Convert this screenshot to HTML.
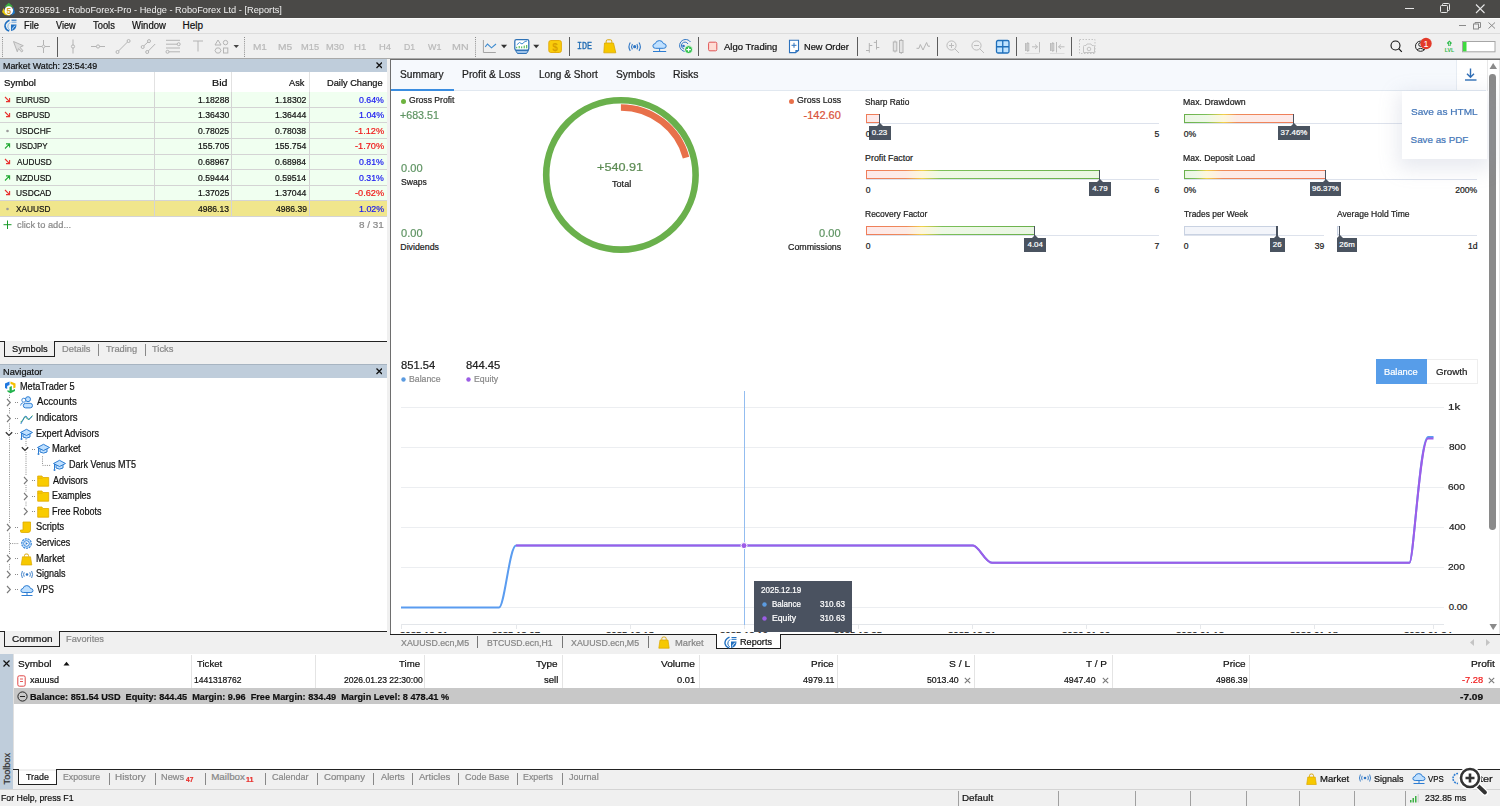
<!DOCTYPE html>
<html><head><meta charset="utf-8"><style>
html,body{margin:0;padding:0;width:1500px;height:806px;overflow:hidden;background:#f0f0f0;font-family:"Liberation Sans", sans-serif;}
.t{position:absolute;white-space:nowrap;line-height:1;-webkit-text-stroke:0.22px currentColor;}

</style></head><body>
<div style="position:absolute;left:0px;top:0px;width:1500px;height:17.5px;background:#4a4947"></div><svg style="position:absolute;left:1px;top:1.5px;" width="15" height="15" viewBox="0 0 15 15"><path d="M7.8 0.8 L12 4.5 L7.8 5.5 L3.6 4.5 Z" fill="#3cb043"/><path d="M12.5 5 L14 11 L10.5 13.8 L11.5 8.5 Z" fill="#1e78c8"/><path d="M2.5 6 L4 10.5 L9.5 13.8 L4 13 L1 10 Z" fill="#e8c800"/><circle cx="7.8" cy="8.6" r="4.3" fill="#fff"/><text x="7.8" y="11.6" font-size="8.4" font-weight="bold" text-anchor="middle" fill="#d9a020" font-family="Liberation Sans">5</text></svg><div class="t" style="left:18.72px;top:4.50px;font-size:9.8px;color:#f0f0f0;transform:scaleX(0.943);transform-origin:left;-webkit-text-stroke:0;">37269591 - RoboForex-Pro - Hedge - RoboForex Ltd - [Reports]</div><div style="position:absolute;left:1405px;top:8px;width:8.5px;height:1px;background:#e6e6e6"></div><svg style="position:absolute;left:1439px;top:3px;" width="12" height="11" viewBox="0 0 12 11"><rect x="1.5" y="2.5" width="7" height="7" rx="1" fill="none" stroke="#e6e6e6" stroke-width="1"/><path d="M3.5 2.5 V1.5 Q3.5 0.5 4.5 0.5 H9.5 Q10.5 0.5 10.5 1.5 V6.5 Q10.5 7.5 9.5 7.5 H8.5" fill="none" stroke="#e6e6e6" stroke-width="1"/></svg><svg style="position:absolute;left:1475px;top:3.5px;" width="11" height="10" viewBox="0 0 11 10"><path d="M1 0.5 L9.5 9 M9.5 0.5 L1 9" stroke="#e6e6e6" stroke-width="1.1"/></svg><div style="position:absolute;left:0px;top:17.5px;width:1500px;height:1px;background:#fafafa"></div><div style="position:absolute;left:0px;top:18.5px;width:1500px;height:14.5px;background:#f0f0f0"></div><svg style="position:absolute;left:4px;top:19.3px;" width="14" height="13" viewBox="0 0 14 13"><path d="M5.5 1.2 Q0.6 3.5 1 7.5 Q1.6 11 5.2 12" stroke="#1f6fc0" stroke-width="1.5" fill="none"/><path d="M6 3.5 Q3.5 5.5 3.8 8 Q4.2 10 5.8 10.8" stroke="#7fb8ea" stroke-width="1" fill="none"/><path d="M7.5 1.2 H12.5" stroke="#1f6fc0" stroke-width="1.1"/><path d="M7.5 3.2 H12.5" stroke="#6aa6de" stroke-width="1"/><path d="M7 5.5 H12.5 Q12.5 11 7 12 Z" fill="#1f6fc0"/><path d="M8.3 10.5 Q9 7.5 11.3 6.8" stroke="#bfe0ff" stroke-width="1" fill="none"/></svg><div class="t" style="left:24.26px;top:20.54px;font-size:10px;color:#111;transform:scaleX(0.923);transform-origin:left;">File</div><div class="t" style="left:56.20px;top:20.54px;font-size:10px;color:#111;transform:scaleX(0.909);transform-origin:left;">View</div><div class="t" style="left:93.11px;top:20.54px;font-size:10px;color:#111;transform:scaleX(0.937);transform-origin:left;">Tools</div><div class="t" style="left:132.20px;top:20.54px;font-size:10px;color:#111;transform:scaleX(0.954);transform-origin:left;">Window</div><div class="t" style="left:182.50px;top:20.54px;font-size:10px;color:#111;">Help</div><div style="position:absolute;left:1459px;top:24.5px;width:6.5px;height:1px;background:#8a8a8a"></div><svg style="position:absolute;left:1473px;top:21.5px;" width="9" height="8" viewBox="0 0 9 8"><rect x="0.5" y="2" width="5" height="5" fill="none" stroke="#8a8a8a"/><path d="M2 2 V0.5 H7.5 V5.5 H6" fill="none" stroke="#8a8a8a"/></svg><svg style="position:absolute;left:1488px;top:22px;" width="8" height="7" viewBox="0 0 8 7"><path d="M0.5 0.5 L7 6.5 M7 0.5 L0.5 6.5" stroke="#8a8a8a" stroke-width="1"/></svg><div style="position:absolute;left:0px;top:33px;width:1500px;height:1px;background:#dcdcdc"></div><div style="position:absolute;left:0px;top:34px;width:1500px;height:23.5px;background:#f0f0f0"></div><div style="position:absolute;left:0px;top:57.5px;width:1500px;height:1px;background:#a9a9a9"></div><svg style="position:absolute;left:1.7px;top:36.5px;" width="2" height="21" viewBox="0 0 2 21"><g fill="#8c8c8c"><rect x="0" y="0.0" width="1" height="1"/><rect x="0" y="2.1" width="1" height="1"/><rect x="0" y="4.2" width="1" height="1"/><rect x="0" y="6.3" width="1" height="1"/><rect x="0" y="8.4" width="1" height="1"/><rect x="0" y="10.5" width="1" height="1"/><rect x="0" y="12.6" width="1" height="1"/><rect x="0" y="14.7" width="1" height="1"/><rect x="0" y="16.8" width="1" height="1"/><rect x="0" y="18.9" width="1" height="1"/></g></svg><svg style="position:absolute;left:0px;top:34px;" width="60" height="24" viewBox="0 0 60 24">
      <path d="M13.5 7.5 L23.3 11.7 L20 13.3 L23 16.8 L21.6 18 L18.5 14.6 L17.3 17.8 Z" fill="#dedede" stroke="#b0b0b0" stroke-width="0.9" stroke-linejoin="round"/>
      <path d="M37 12.5 H50 M43.5 6 V19" stroke="#b4b4b4" stroke-width="1"/>
      <circle cx="43.5" cy="12.5" r="1.4" fill="#f0f0f0" stroke="#b4b4b4" stroke-width="0.9"/>
    </svg><div style="position:absolute;left:57px;top:37px;width:1px;height:19.5px;background:#5c5c5c"></div><svg style="position:absolute;left:60px;top:34px;" width="190" height="24" viewBox="0 0 190 24">
      <g stroke="#b4b4b4" stroke-width="1" fill="#f0f0f0">
      <path d="M13 5.5 V19.5"/><circle cx="13" cy="12.5" r="1.6"/>
      <path d="M31 12.5 H45"/><circle cx="38" cy="12.5" r="1.6"/>
      <path d="M58.5 17 L67.5 8"/><circle cx="57.5" cy="18" r="1.5"/><circle cx="68.6" cy="7" r="1.5"/>
      <path d="M83.7 12 L88 8"/><circle cx="82.7" cy="13" r="1.5"/><circle cx="89" cy="7.1" r="1.5"/>
      <path d="M88.3 17 L95.2 10"/><circle cx="87.2" cy="18" r="1.5"/>
      <path d="M106 6.3 H120 M106 10.2 H117.2 M106 14 H120 M109 17.8 H120"/>
      <circle cx="118.7" cy="10.2" r="1.5"/><circle cx="107.5" cy="17.8" r="1.5"/>
      <path d="M133 7 H143 M138 7 V17.5"/>
      <path d="M155 11 L158 6 L161 11 Z"/><circle cx="165.5" cy="8.6" r="2.2"/>
      <path d="M155 16.5 L156.5 14 H159.5 L161 16.5 L159.5 19 H156.5 Z"/><rect x="163.5" y="14" width="4.3" height="5"/>
      </g>
      <path d="M173.5 11 H179 L176.25 14 Z" fill="#444"/>
    </svg><svg style="position:absolute;left:244px;top:36.5px;" width="2" height="21" viewBox="0 0 2 21"><g fill="#8c8c8c"><rect x="0" y="0.0" width="1" height="1"/><rect x="0" y="2.1" width="1" height="1"/><rect x="0" y="4.2" width="1" height="1"/><rect x="0" y="6.3" width="1" height="1"/><rect x="0" y="8.4" width="1" height="1"/><rect x="0" y="10.5" width="1" height="1"/><rect x="0" y="12.6" width="1" height="1"/><rect x="0" y="14.7" width="1" height="1"/><rect x="0" y="16.8" width="1" height="1"/><rect x="0" y="18.9" width="1" height="1"/></g></svg><div class="t" style="left:253.20px;top:41.89px;font-size:9.7px;color:#b9b9b9;transform:scaleX(1.037);transform-origin:left;">M1</div><div class="t" style="left:278.18px;top:41.89px;font-size:9.7px;color:#b9b9b9;transform:scaleX(1.053);transform-origin:left;">M5</div><div class="t" style="left:301.26px;top:41.89px;font-size:9.7px;color:#b9b9b9;transform:scaleX(0.958);transform-origin:left;">M15</div><div class="t" style="left:326.26px;top:41.89px;font-size:9.7px;color:#b9b9b9;transform:scaleX(0.958);transform-origin:left;">M30</div><div class="t" style="left:354.24px;top:41.89px;font-size:9.7px;color:#b9b9b9;transform:scaleX(0.984);transform-origin:left;">H1</div><div class="t" style="left:379.25px;top:41.89px;font-size:9.7px;color:#b9b9b9;transform:scaleX(0.967);transform-origin:left;">H4</div><div class="t" style="left:404.31px;top:41.89px;font-size:9.7px;color:#b9b9b9;transform:scaleX(0.895);transform-origin:left;">D1</div><div class="t" style="left:428.00px;top:41.89px;font-size:9.7px;color:#b9b9b9;transform:scaleX(0.922);transform-origin:left;">W1</div><div class="t" style="left:452.14px;top:41.89px;font-size:9.7px;color:#b9b9b9;transform:scaleX(1.102);transform-origin:left;">MN</div><svg style="position:absolute;left:474.5px;top:36.5px;" width="2" height="21" viewBox="0 0 2 21"><g fill="#8c8c8c"><rect x="0" y="0.0" width="1" height="1"/><rect x="0" y="2.1" width="1" height="1"/><rect x="0" y="4.2" width="1" height="1"/><rect x="0" y="6.3" width="1" height="1"/><rect x="0" y="8.4" width="1" height="1"/><rect x="0" y="10.5" width="1" height="1"/><rect x="0" y="12.6" width="1" height="1"/><rect x="0" y="14.7" width="1" height="1"/><rect x="0" y="16.8" width="1" height="1"/><rect x="0" y="18.9" width="1" height="1"/></g></svg><svg style="position:absolute;left:478px;top:34px;" width="92" height="24" viewBox="0 0 92 24">
      <path d="M5.4 6 V18.5 H17.8" stroke="#a4a4a4" stroke-width="1" fill="none"/>
      <path d="M7.2 12.8 L9.5 10 L13.5 13.8 L18 10" stroke="#3d8bd0" stroke-width="1.1" fill="none"/>
      <path d="M23 10.8 H29.1 L26.05 14.2 Z" fill="#333"/>
      <rect x="36.8" y="5.6" width="14" height="10.6" rx="1.6" fill="#fff" stroke="#2f72b6" stroke-width="1.3"/>
      <path d="M37.5 16.5 H50.5 L48.5 19.5 H39.5 Z" fill="#9fc3ea" stroke="#2f72b6" stroke-width="1"/>
      <path d="M38.8 10.8 L41.5 8.5 L44 10 L47 7.5 L49 7" stroke="#3d8bd0" stroke-width="1" fill="none"/>
      <g fill="#3cb043"><rect x="38.2" y="12.8" width="1" height="1.5"/><rect x="40.7" y="12" width="1" height="2.3"/><rect x="43.2" y="12.4" width="1" height="1.9"/><rect x="45.7" y="11.6" width="1" height="2.7"/><rect x="48.2" y="11" width="1" height="3.3"/></g>
      <path d="M55.2 10.8 H61.3 L58.25 14.2 Z" fill="#333"/>
      <rect x="70.8" y="6.5" width="12.6" height="12" rx="2" fill="#f9cc0b" stroke="#e2a700" stroke-width="0.9"/>
      <text x="77.1" y="16.8" font-size="10" font-weight="bold" text-anchor="middle" fill="#d9a000" font-family="Liberation Sans">$</text>
    </svg><div style="position:absolute;left:568.5px;top:37px;width:1px;height:19px;background:#5c5c5c"></div><div class="t" style="left:577.04px;top:41.40px;font-size:10.4px;color:#1f6bb3;font-family:'Liberation Mono';transform:scaleX(0.811);transform-origin:left;-webkit-text-stroke:0.35px currentColor;">IDE</div><svg style="position:absolute;left:600px;top:34px;" width="100" height="24" viewBox="0 0 100 24">
      <path d="M6.2 8.8 V7.2 Q6.2 5.8 7.6 5.8 H10.4 Q11.8 5.8 11.8 7.2 V8.8" stroke="#d9a400" stroke-width="1" fill="none"/>
      <path d="M4.5 9 H13.5 L15.8 18.8 H3.8 Z" fill="#f6c800" stroke="#dba700" stroke-width="0.8"/>
      <g stroke="#2d75c4" stroke-width="1.1" fill="none">
        <path d="M30.3 8.5 Q27.6 12.7 30.3 16.9"/><path d="M32.4 10 Q30.8 12.7 32.4 15.4"/>
        <path d="M39 8.5 Q41.7 12.7 39 16.9"/><path d="M36.9 10 Q38.5 12.7 36.9 15.4"/>
      </g>
      <circle cx="34.7" cy="12.7" r="1.6" fill="#2d75c4"/>
      <path d="M55.5 14.3 Q52.8 14.3 52.9 11.9 Q53 9.8 55.3 9.6 Q56 6.6 59.4 6.6 Q62.6 6.6 63.4 9.6 Q66.2 9.7 66.2 12 Q66.2 14.3 63.7 14.3 Z" fill="#bfe0ff" stroke="#2d7dd2" stroke-width="1"/>
      <path d="M59.6 14.3 V17.5 M53 17.5 H66.2" stroke="#2d7dd2" stroke-width="1"/>
      <g stroke="#2d75c4" stroke-width="1" fill="none">
        <path d="M86 17.5 A6 6 0 1 1 90.5 8"/><path d="M84 15 A3.5 3.5 0 1 1 88 10"/>
      </g>
      <circle cx="83.5" cy="12" r="1.3" fill="#2d75c4"/>
      <circle cx="88.6" cy="15.6" r="4" fill="#33c04d" stroke="#fff" stroke-width="0.8"/>
      <path d="M88.6 13.4 V17.8 M86.4 15.6 H90.8" stroke="#fff" stroke-width="1.1"/>
    </svg><div style="position:absolute;left:697.8px;top:37px;width:1px;height:19px;background:#5c5c5c"></div><svg style="position:absolute;left:700px;top:34px;" width="110" height="24" viewBox="0 0 110 24">
      <rect x="8.6" y="8.2" width="8.2" height="8.6" rx="1.2" fill="#ffdcd4" stroke="#e05454" stroke-width="1"/>
      <path d="M89.5 6.3 H98.5 V16.5 L95.5 18.6 H89.5 Z" fill="#fff" stroke="#2d72bd" stroke-width="1.1"/>
      <path d="M98.6 16 L95.4 18.8 V16 Z" fill="#2d72bd"/>
      <path d="M94 8.8 V13.8 M91.5 11.3 H96.5" stroke="#2d72bd" stroke-width="1"/>
    </svg><div class="t" style="left:723.50px;top:41.80px;font-size:9.8px;color:#111;transform:scaleX(0.970);transform-origin:left;">Algo Trading</div><div class="t" style="left:804.26px;top:41.80px;font-size:9.8px;color:#111;transform:scaleX(0.947);transform-origin:left;">New Order</div><div style="position:absolute;left:857px;top:37px;width:1px;height:19px;background:#5c5c5c"></div><svg style="position:absolute;left:860px;top:34px;" width="80" height="24" viewBox="0 0 80 24">
      <g stroke="#b4b4b4" stroke-width="1" fill="none">
        <path d="M9.3 9 V18.7 M6 16.5 H9.3 M9.3 11.5 H12.3"/>
        <path d="M16.5 6 V15.5 M13.8 8.4 H16.5 M16.5 13.5 H19.3"/>
        <rect x="33.3" y="8" width="3.5" height="9" fill="#e4e4e4"/><path d="M35 6.5 V8 M35 17 V18.5"/>
        <rect x="39.5" y="6.5" width="3.5" height="12" fill="#e4e4e4"/><path d="M41.2 5 V6.5 M41.2 18.5 V20"/>
        <path d="M56.5 14.3 H59 L60.3 10.5 L63 16 L66.6 8.5 L68 12.2 H70"/>
      </g>
    </svg><div style="position:absolute;left:936.8px;top:37px;width:1px;height:19px;background:#5c5c5c"></div><svg style="position:absolute;left:940px;top:34px;" width="160" height="24" viewBox="0 0 160 24">
      <g stroke="#bcbcbc" stroke-width="1" fill="none">
        <circle cx="11.5" cy="11.5" r="4.6"/><path d="M14.8 14.8 L19 19 M9 11.5 H14 M11.5 9 V14"/>
        <circle cx="36.5" cy="11.5" r="4.6"/><path d="M39.8 14.8 L44 19 M34 11.5 H39"/>
      </g>
      <rect x="56.5" y="6.5" width="12.5" height="12.5" rx="1.5" fill="#bfe3ff" stroke="#1f6fba" stroke-width="1.3"/>
      <path d="M62.75 6.5 V19 M56.5 12.75 H69" stroke="#1f6fba" stroke-width="1.3"/>
    </svg><div style="position:absolute;left:1016.2px;top:37px;width:1px;height:19px;background:#5c5c5c"></div><svg style="position:absolute;left:1020px;top:34px;" width="50" height="24" viewBox="0 0 50 24">
      <g stroke="#bcbcbc" stroke-width="1" fill="none">
        <path d="M5.5 9 V17 M7.8 8 V18"/><rect x="6.8" y="9.5" width="2" height="7"/>
        <path d="M12 12.8 H17.5 M15 10.5 L17.5 12.8 L15 15"/><path d="M19.5 8 V18.5"/>
        <path d="M5 19.5 H19.5" stroke="#dcdcdc"/>
        <path d="M30.5 9 V17 M32.8 8 V18"/><rect x="31.8" y="9.5" width="2" height="7"/>
        <path d="M36.5 8 V18.5"/><path d="M38.5 12.8 H44.5 M41 10.5 L38.5 12.8 L41 15"/>
        <path d="M30 19.5 H44.5" stroke="#dcdcdc"/>
      </g>
    </svg><div style="position:absolute;left:1071.2px;top:37px;width:1px;height:19px;background:#5c5c5c"></div><svg style="position:absolute;left:1076px;top:34px;" width="24" height="24" viewBox="0 0 24 24">
      <rect x="3.5" y="5.5" width="15.5" height="14" fill="none" stroke="#c4c4c4" stroke-width="1" stroke-dasharray="1.5 1.5"/>
      <path d="M7.5 18.5 V12.5 Q7.5 11.5 8.5 11.5 H10 L11 10 H15 L16 11.5 H17.5 Q18.5 11.5 18.5 12.5 V18.5 Z" fill="#f0f0f0" stroke="#c4c4c4" stroke-width="1"/>
      <circle cx="13" cy="15" r="1.8" fill="none" stroke="#c4c4c4" stroke-width="1"/>
    </svg><svg style="position:absolute;left:1385px;top:34px;" width="115" height="24" viewBox="0 0 115 24">
      <circle cx="10.5" cy="11.5" r="4.5" fill="none" stroke="#111" stroke-width="1.1"/>
      <path d="M13.7 14.7 L16.8 17.8" stroke="#111" stroke-width="1.2"/>
      <circle cx="35.6" cy="12.2" r="5.1" fill="none" stroke="#222" stroke-width="1"/>
      <circle cx="35.6" cy="10.5" r="1.9" fill="none" stroke="#222" stroke-width="1"/>
      <path d="M32 16 Q35.6 12.8 39.2 16" fill="none" stroke="#222" stroke-width="1"/>
      <circle cx="41" cy="9.5" r="5.7" fill="#e33a2a"/>
      <text x="41" y="13.2" font-size="9" text-anchor="middle" fill="#fff" font-family="Liberation Sans">1</text>
      <path d="M64.4 6.5 L67 9 L65.6 10.5 V12 H63.2 V10.5 L61.8 9 Z" fill="#2db84a"/>
      <path d="M64.4 8 V11.5" stroke="#fff" stroke-width="0.7"/>
      <text x="64.5" y="18.2" font-size="5.2" font-weight="bold" text-anchor="middle" fill="#2db84a" font-family="Liberation Sans">LVL</text>
      <rect x="77.5" y="7.5" width="32.5" height="10.3" fill="#fff" stroke="#a6a6a6" stroke-width="1"/>
      <rect x="78" y="8" width="3.5" height="9.3" fill="#3edb3e"/>
    </svg><div style="position:absolute;left:0px;top:58.5px;width:387px;height:13.3px;background:#bfcddb"></div><div class="t" style="left:2.99px;top:60.50px;font-size:9.8px;color:#111;transform:scaleX(0.908);transform-origin:left;">Market Watch: 23:54:49</div><svg style="position:absolute;left:375.5px;top:62px;" width="6.5" height="6.5" viewBox="0 0 6.5 6.5"><path d="M0.5 0.5 L6.0 6.0 M6.0 0.5 L0.5 6.0" stroke="#111" stroke-width="1.3"/></svg><div style="position:absolute;left:0px;top:71.8px;width:387px;height:269.5px;background:#fff"></div><div style="position:absolute;left:387px;top:71.8px;width:3px;height:269.5px;background:#f0f0f0"></div><div class="t" style="left:4.32px;top:77.50px;font-size:9.8px;color:#111;transform:scaleX(0.979);transform-origin:left;">Symbol</div><div class="t" style="left:212.14px;top:77.50px;font-size:9.8px;color:#111;transform:scaleX(1.091);transform-origin:left;">Bid</div><div class="t" style="left:289.20px;top:77.50px;font-size:9.8px;color:#111;transform:scaleX(0.943);transform-origin:left;">Ask</div><div class="t" style="left:326.76px;top:77.50px;font-size:9.8px;color:#111;transform:scaleX(0.945);transform-origin:left;">Daily Change</div><div style="position:absolute;left:154.3px;top:72px;width:1px;height:20px;background:#e2e2e2"></div><div style="position:absolute;left:231px;top:72px;width:1px;height:20px;background:#e2e2e2"></div><div style="position:absolute;left:308.5px;top:72px;width:1px;height:20px;background:#e2e2e2"></div><div style="position:absolute;left:0px;top:92.0px;width:386.5px;height:15.625px;background:#f0fff0"></div><div style="position:absolute;left:0px;top:106.625px;width:386.5px;height:1px;background:#d4d4d4"></div><div style="position:absolute;left:154.3px;top:92.0px;width:1px;height:15.625px;background:#d4d4d4"></div><div style="position:absolute;left:231px;top:92.0px;width:1px;height:15.625px;background:#d4d4d4"></div><div style="position:absolute;left:308.5px;top:92.0px;width:1px;height:15.625px;background:#d4d4d4"></div><svg style="position:absolute;left:4px;top:95.6px;" width="7" height="8" viewBox="0 0 7 8"><path d="M1 1 L5.6 5.6 M5.6 2 V5.6 H2" stroke="#e8322e" stroke-width="1.1" fill="none"/></svg><div class="t" style="left:15.96px;top:94.52px;font-size:9.9px;color:#111;transform:scaleX(0.813);transform-origin:left;">EURUSD</div><div class="t" style="left:197.69px;top:94.52px;font-size:9.9px;color:#111;transform:scaleX(0.878);transform-origin:left;">1.18288</div><div class="t" style="left:275.09px;top:94.52px;font-size:9.9px;color:#111;transform:scaleX(0.881);transform-origin:left;">1.18302</div><div class="t" style="left:359.04px;top:94.52px;font-size:9.9px;color:#1a1af0;transform:scaleX(0.888);transform-origin:left;">0.64%</div><div style="position:absolute;left:0px;top:107.625px;width:386.5px;height:15.625px;background:#f0fff0"></div><div style="position:absolute;left:0px;top:122.25px;width:386.5px;height:1px;background:#d4d4d4"></div><div style="position:absolute;left:154.3px;top:107.625px;width:1px;height:15.625px;background:#d4d4d4"></div><div style="position:absolute;left:231px;top:107.625px;width:1px;height:15.625px;background:#d4d4d4"></div><div style="position:absolute;left:308.5px;top:107.625px;width:1px;height:15.625px;background:#d4d4d4"></div><svg style="position:absolute;left:4px;top:111.225px;" width="7" height="8" viewBox="0 0 7 8"><path d="M1 1 L5.6 5.6 M5.6 2 V5.6 H2" stroke="#e8322e" stroke-width="1.1" fill="none"/></svg><div class="t" style="left:16.19px;top:110.14px;font-size:9.9px;color:#111;transform:scaleX(0.819);transform-origin:left;">GBPUSD</div><div class="t" style="left:197.69px;top:110.14px;font-size:9.9px;color:#111;transform:scaleX(0.878);transform-origin:left;">1.36430</div><div class="t" style="left:275.09px;top:110.14px;font-size:9.9px;color:#111;transform:scaleX(0.876);transform-origin:left;">1.36444</div><div class="t" style="left:358.68px;top:110.14px;font-size:9.9px;color:#1a1af0;transform:scaleX(0.901);transform-origin:left;">1.04%</div><div style="position:absolute;left:0px;top:123.25px;width:386.5px;height:15.625px;background:#f0fff0"></div><div style="position:absolute;left:0px;top:137.875px;width:386.5px;height:1px;background:#d4d4d4"></div><div style="position:absolute;left:154.3px;top:123.25px;width:1px;height:15.625px;background:#d4d4d4"></div><div style="position:absolute;left:231px;top:123.25px;width:1px;height:15.625px;background:#d4d4d4"></div><div style="position:absolute;left:308.5px;top:123.25px;width:1px;height:15.625px;background:#d4d4d4"></div><svg style="position:absolute;left:4px;top:126.85px;" width="7" height="8" viewBox="0 0 7 8"><circle cx="3.5" cy="4" r="1.3" fill="#9a9a9a"/></svg><div class="t" style="left:16.01px;top:125.77px;font-size:9.9px;color:#111;transform:scaleX(0.845);transform-origin:left;">USDCHF</div><div class="t" style="left:198.04px;top:125.77px;font-size:9.9px;color:#111;transform:scaleX(0.868);transform-origin:left;">0.78025</div><div class="t" style="left:275.44px;top:125.77px;font-size:9.9px;color:#111;transform:scaleX(0.868);transform-origin:left;">0.78038</div><div class="t" style="left:354.73px;top:125.77px;font-size:9.9px;color:#f01a1a;transform:scaleX(0.932);transform-origin:left;">-1.12%</div><div style="position:absolute;left:0px;top:138.875px;width:386.5px;height:15.625px;background:#f0fff0"></div><div style="position:absolute;left:0px;top:153.5px;width:386.5px;height:1px;background:#d4d4d4"></div><div style="position:absolute;left:154.3px;top:138.875px;width:1px;height:15.625px;background:#d4d4d4"></div><div style="position:absolute;left:231px;top:138.875px;width:1px;height:15.625px;background:#d4d4d4"></div><div style="position:absolute;left:308.5px;top:138.875px;width:1px;height:15.625px;background:#d4d4d4"></div><svg style="position:absolute;left:4px;top:142.475px;" width="7" height="8" viewBox="0 0 7 8"><path d="M1 6.5 L5.6 1.9 M2 1.9 H5.6 V5.5" stroke="#22aa33" stroke-width="1.1" fill="none"/></svg><div class="t" style="left:16.04px;top:141.39px;font-size:9.9px;color:#111;transform:scaleX(0.812);transform-origin:left;">USDJPY</div><div class="t" style="left:197.69px;top:141.39px;font-size:9.9px;color:#111;transform:scaleX(0.878);transform-origin:left;">155.705</div><div class="t" style="left:275.09px;top:141.39px;font-size:9.9px;color:#111;transform:scaleX(0.876);transform-origin:left;">155.754</div><div class="t" style="left:354.73px;top:141.39px;font-size:9.9px;color:#f01a1a;transform:scaleX(0.932);transform-origin:left;">-1.70%</div><div style="position:absolute;left:0px;top:154.5px;width:386.5px;height:15.625px;background:#f0fff0"></div><div style="position:absolute;left:0px;top:169.125px;width:386.5px;height:1px;background:#d4d4d4"></div><div style="position:absolute;left:154.3px;top:154.5px;width:1px;height:15.625px;background:#d4d4d4"></div><div style="position:absolute;left:231px;top:154.5px;width:1px;height:15.625px;background:#d4d4d4"></div><div style="position:absolute;left:308.5px;top:154.5px;width:1px;height:15.625px;background:#d4d4d4"></div><svg style="position:absolute;left:4px;top:158.1px;" width="7" height="8" viewBox="0 0 7 8"><path d="M1 1 L5.6 5.6 M5.6 2 V5.6 H2" stroke="#e8322e" stroke-width="1.1" fill="none"/></svg><div class="t" style="left:16.60px;top:157.02px;font-size:9.9px;color:#111;transform:scaleX(0.834);transform-origin:left;">AUDUSD</div><div class="t" style="left:198.04px;top:157.02px;font-size:9.9px;color:#111;transform:scaleX(0.871);transform-origin:left;">0.68967</div><div class="t" style="left:275.44px;top:157.02px;font-size:9.9px;color:#111;transform:scaleX(0.866);transform-origin:left;">0.68984</div><div class="t" style="left:359.04px;top:157.02px;font-size:9.9px;color:#1a1af0;transform:scaleX(0.888);transform-origin:left;">0.81%</div><div style="position:absolute;left:0px;top:170.125px;width:386.5px;height:15.625px;background:#f0fff0"></div><div style="position:absolute;left:0px;top:184.75px;width:386.5px;height:1px;background:#d4d4d4"></div><div style="position:absolute;left:154.3px;top:170.125px;width:1px;height:15.625px;background:#d4d4d4"></div><div style="position:absolute;left:231px;top:170.125px;width:1px;height:15.625px;background:#d4d4d4"></div><div style="position:absolute;left:308.5px;top:170.125px;width:1px;height:15.625px;background:#d4d4d4"></div><svg style="position:absolute;left:4px;top:173.725px;" width="7" height="8" viewBox="0 0 7 8"><path d="M1 6.5 L5.6 1.9 M2 1.9 H5.6 V5.5" stroke="#22aa33" stroke-width="1.1" fill="none"/></svg><div class="t" style="left:15.92px;top:172.64px;font-size:9.9px;color:#111;transform:scaleX(0.862);transform-origin:left;">NZDUSD</div><div class="t" style="left:198.04px;top:172.64px;font-size:9.9px;color:#111;transform:scaleX(0.866);transform-origin:left;">0.59444</div><div class="t" style="left:275.44px;top:172.64px;font-size:9.9px;color:#111;transform:scaleX(0.866);transform-origin:left;">0.59514</div><div class="t" style="left:359.04px;top:172.64px;font-size:9.9px;color:#1a1af0;transform:scaleX(0.888);transform-origin:left;">0.31%</div><div style="position:absolute;left:0px;top:185.75px;width:386.5px;height:15.625px;background:#f0fff0"></div><div style="position:absolute;left:0px;top:200.375px;width:386.5px;height:1px;background:#d4d4d4"></div><div style="position:absolute;left:154.3px;top:185.75px;width:1px;height:15.625px;background:#d4d4d4"></div><div style="position:absolute;left:231px;top:185.75px;width:1px;height:15.625px;background:#d4d4d4"></div><div style="position:absolute;left:308.5px;top:185.75px;width:1px;height:15.625px;background:#d4d4d4"></div><svg style="position:absolute;left:4px;top:189.35px;" width="7" height="8" viewBox="0 0 7 8"><path d="M1 1 L5.6 5.6 M5.6 2 V5.6 H2" stroke="#e8322e" stroke-width="1.1" fill="none"/></svg><div class="t" style="left:16.01px;top:188.27px;font-size:9.9px;color:#111;transform:scaleX(0.848);transform-origin:left;">USDCAD</div><div class="t" style="left:197.69px;top:188.27px;font-size:9.9px;color:#111;transform:scaleX(0.878);transform-origin:left;">1.37025</div><div class="t" style="left:275.09px;top:188.27px;font-size:9.9px;color:#111;transform:scaleX(0.876);transform-origin:left;">1.37044</div><div class="t" style="left:354.73px;top:188.27px;font-size:9.9px;color:#f01a1a;transform:scaleX(0.932);transform-origin:left;">-0.62%</div><div style="position:absolute;left:0px;top:201.375px;width:386.5px;height:15.625px;background:#f0e68c"></div><div style="position:absolute;left:0px;top:216.0px;width:386.5px;height:1px;background:#d4d4d4"></div><div style="position:absolute;left:154.3px;top:201.375px;width:1px;height:15.625px;background:#d4d4d4"></div><div style="position:absolute;left:231px;top:201.375px;width:1px;height:15.625px;background:#d4d4d4"></div><div style="position:absolute;left:308.5px;top:201.375px;width:1px;height:15.625px;background:#d4d4d4"></div><svg style="position:absolute;left:4px;top:204.975px;" width="7" height="8" viewBox="0 0 7 8"><circle cx="3.5" cy="4" r="1.3" fill="#9a9a9a"/></svg><div class="t" style="left:16.43px;top:203.89px;font-size:9.9px;color:#111;transform:scaleX(0.837);transform-origin:left;">XAUUSD</div><div class="t" style="left:198.13px;top:203.89px;font-size:9.9px;color:#111;transform:scaleX(0.866);transform-origin:left;">4986.13</div><div class="t" style="left:275.53px;top:203.89px;font-size:9.9px;color:#111;transform:scaleX(0.868);transform-origin:left;">4986.39</div><div class="t" style="left:358.68px;top:203.89px;font-size:9.9px;color:#1a1af0;transform:scaleX(0.901);transform-origin:left;">1.02%</div><svg style="position:absolute;left:3px;top:219.5px;" width="10" height="10" viewBox="0 0 10 10"><path d="M4.5 0.5 V9 M0.5 4.7 H8.5" stroke="#1a9a2a" stroke-width="1"/></svg><div class="t" style="left:16.63px;top:220.09px;font-size:9.7px;color:#8a8a8a;transform:scaleX(0.957);transform-origin:left;">click to add...</div><div class="t" style="left:358.60px;top:220.09px;font-size:9.7px;color:#8a8a8a;transform:scaleX(1.024);transform-origin:left;">8 / 31</div><div style="position:absolute;left:0px;top:341.3px;width:390px;height:23px;background:#f0f0f0"></div><div style="position:absolute;left:0px;top:341.3px;width:4.7px;height:1px;background:#222"></div><div style="position:absolute;left:54.5px;top:341.3px;width:332px;height:1px;background:#222"></div><div style="position:absolute;left:4.2px;top:341.3px;width:1px;height:15.5px;background:#222"></div><div style="position:absolute;left:54px;top:341.3px;width:1px;height:15.5px;background:#222"></div><div style="position:absolute;left:4.2px;top:356px;width:50.8px;height:1px;background:#222"></div><div class="t" style="left:11.63px;top:344.20px;font-size:9.8px;color:#111;transform:scaleX(0.949);transform-origin:left;">Symbols</div><div class="t" style="left:61.75px;top:344.20px;font-size:9.8px;color:#888;transform:scaleX(0.952);transform-origin:left;">Details</div><div style="position:absolute;left:98px;top:344px;width:1px;height:12px;background:#888"></div><div class="t" style="left:105.81px;top:344.20px;font-size:9.8px;color:#888;transform:scaleX(0.950);transform-origin:left;">Trading</div><div style="position:absolute;left:144.5px;top:344px;width:1px;height:12px;background:#888"></div><div class="t" style="left:152.31px;top:344.20px;font-size:9.8px;color:#888;transform:scaleX(0.954);transform-origin:left;">Ticks</div><div style="position:absolute;left:0px;top:364.4px;width:387px;height:1px;background:#a7b4c1"></div><div style="position:absolute;left:0px;top:365.4px;width:387px;height:12.3px;background:#bfcddb"></div><div class="t" style="left:2.66px;top:366.50px;font-size:9.8px;color:#111;transform:scaleX(0.938);transform-origin:left;">Navigator</div><svg style="position:absolute;left:375.5px;top:368px;" width="6.5" height="6.5" viewBox="0 0 6.5 6.5"><path d="M0.5 0.5 L6.0 6.0 M6.0 0.5 L0.5 6.0" stroke="#111" stroke-width="1.3"/></svg><div style="position:absolute;left:0px;top:377.7px;width:387px;height:253.3px;background:#fff"></div><div style="position:absolute;left:387px;top:364.4px;width:3px;height:267px;background:#f0f0f0"></div><svg style="position:absolute;left:0px;top:378px;" width="60" height="260" viewBox="0 0 60 260">
      <path d="M9.5 16.80000000000001 V196.29999999999995" stroke="#8a8a8a" stroke-width="1" stroke-dasharray="1 1.2"/>
      <path d="M26 60.67500000000001 V129.8" stroke="#8a8a8a" stroke-width="1" stroke-dasharray="1 1.2"/>
      <path d="M42.5 78.30000000000001 V86.92500000000001" stroke="#8a8a8a" stroke-width="1" stroke-dasharray="1 1.2"/>
      <path d="M42.5 87.42500000000001 H51" stroke="#8a8a8a" stroke-width="1" stroke-dasharray="1 1.2"/>
      <path d="M10 165.54999999999995 H19" stroke="#8a8a8a" stroke-width="1" stroke-dasharray="1 1.2"/>
    </svg><svg style="position:absolute;left:3.5px;top:380.8px;" width="13" height="13" viewBox="0 0 13 13"><path d="M1 2.5 L5.5 0.5 L5.5 4 L3.2 5 V8 L1 7 Z" fill="#1e78e0"/><path d="M6.5 0.5 L11.5 2.5 V6.5 L9.3 7.5 V4 L6.5 3 Z" fill="#f5c000"/><path d="M3.5 9 L5.5 10 V6 L7.8 5 V9.5 L11 8 V10 L6.5 12.2 L3.5 10.8 Z" fill="#22b24c"/></svg><div class="t" style="left:19.77px;top:381.84px;font-size:10px;color:#111;transform:scaleX(0.915);transform-origin:left;">MetaTrader 5</div><svg style="position:absolute;left:6.0px;top:397.925px;" width="6" height="9" viewBox="0 0 6 9"><rect x="0" y="0" width="6" height="9" fill="#fff"/><path d="M1 1 L4.3 4.5 L1 8" stroke="#7a7a7a" stroke-width="1.1" fill="none"/></svg><svg style="position:absolute;left:15.0px;top:401.925px;" width="4" height="1" viewBox="0 0 4 1"><rect x="0" y="0" width="1" height="1" fill="#8a8a8a"/><rect x="2" y="0" width="1" height="1" fill="#8a8a8a"/></svg><div class="t" style="left:36.50px;top:397.46px;font-size:10px;color:#111;transform:scaleX(0.967);transform-origin:left;">Accounts</div><svg style="position:absolute;left:20.0px;top:396.425px;" width="13" height="13" viewBox="0 0 13 13"><circle cx="3.8" cy="4.2" r="2" fill="none" stroke="#2d7dd2" stroke-width="0.9"/><path d="M0.6 9.5 Q0.8 7 3 6.8" fill="none" stroke="#2d7dd2" stroke-width="0.9"/><circle cx="8" cy="3.2" r="2.5" fill="#bfe0ff" stroke="#2d7dd2" stroke-width="1"/><rect x="3.3" y="7.3" width="9.2" height="4.6" rx="2.3" fill="#bfe0ff" stroke="#2d7dd2" stroke-width="1"/></svg><svg style="position:absolute;left:6.0px;top:413.55px;" width="6" height="9" viewBox="0 0 6 9"><rect x="0" y="0" width="6" height="9" fill="#fff"/><path d="M1 1 L4.3 4.5 L1 8" stroke="#7a7a7a" stroke-width="1.1" fill="none"/></svg><svg style="position:absolute;left:15.0px;top:417.55px;" width="4" height="1" viewBox="0 0 4 1"><rect x="0" y="0" width="1" height="1" fill="#8a8a8a"/><rect x="2" y="0" width="1" height="1" fill="#8a8a8a"/></svg><div class="t" style="left:35.64px;top:413.09px;font-size:10px;color:#111;transform:scaleX(0.961);transform-origin:left;">Indicators</div><svg style="position:absolute;left:20.0px;top:412.05px;" width="13" height="13" viewBox="0 0 13 13"><path d="M0.5 10 Q3 9 4 6 Q5 3 6.5 6 Q8 9 10 6.5 L12.5 3.5" stroke="#3cb043" stroke-width="1" fill="none"/><path d="M0.8 12 Q3 8 4.5 5 Q6 2.5 7.5 6 Q9 9.5 12 4" stroke="#2d7dd2" stroke-width="0.9" fill="none"/></svg><svg style="position:absolute;left:4.699999999999999px;top:430.675px;" width="8" height="6" viewBox="0 0 8 6"><rect x="0" y="0" width="8" height="6" fill="#fff"/><path d="M0.8 1.2 L4 4.4 L7.2 1.2" stroke="#333" stroke-width="1.3" fill="none"/></svg><svg style="position:absolute;left:15.0px;top:433.175px;" width="4" height="1" viewBox="0 0 4 1"><rect x="0" y="0" width="1" height="1" fill="#8a8a8a"/><rect x="2" y="0" width="1" height="1" fill="#8a8a8a"/></svg><div class="t" style="left:35.77px;top:428.71px;font-size:10px;color:#111;transform:scaleX(0.907);transform-origin:left;">Expert Advisors</div><svg style="position:absolute;left:20.0px;top:427.675px;" width="13" height="13" viewBox="0 0 13 13"><path d="M3 6 V9 Q6.5 11.2 10 9 V6" fill="#bfe0ff" stroke="#2d7dd2" stroke-width="1"/><path d="M0.5 4.5 L6.5 1.3 L12.5 4.5 L6.5 7.5 Z" fill="#bfe0ff" stroke="#2d7dd2" stroke-width="1"/><path d="M1.5 5 V10.5" stroke="#2d7dd2" stroke-width="1"/><circle cx="1.5" cy="11" r="1" fill="#2d7dd2"/></svg><svg style="position:absolute;left:21.2px;top:446.3px;" width="8" height="6" viewBox="0 0 8 6"><rect x="0" y="0" width="8" height="6" fill="#fff"/><path d="M0.8 1.2 L4 4.4 L7.2 1.2" stroke="#333" stroke-width="1.3" fill="none"/></svg><svg style="position:absolute;left:31.5px;top:448.8px;" width="4" height="1" viewBox="0 0 4 1"><rect x="0" y="0" width="1" height="1" fill="#8a8a8a"/><rect x="2" y="0" width="1" height="1" fill="#8a8a8a"/></svg><div class="t" style="left:52.25px;top:444.34px;font-size:10px;color:#111;transform:scaleX(0.940);transform-origin:left;">Market</div><svg style="position:absolute;left:36.5px;top:443.3px;" width="13" height="13" viewBox="0 0 13 13"><path d="M3 6 V9 Q6.5 11.2 10 9 V6" fill="#bfe0ff" stroke="#2d7dd2" stroke-width="1"/><path d="M0.5 4.5 L6.5 1.3 L12.5 4.5 L6.5 7.5 Z" fill="#bfe0ff" stroke="#2d7dd2" stroke-width="1"/><path d="M1.5 5 V10.5" stroke="#2d7dd2" stroke-width="1"/><circle cx="1.5" cy="11" r="1" fill="#2d7dd2"/></svg><div class="t" style="left:68.78px;top:459.96px;font-size:10px;color:#111;transform:scaleX(0.900);transform-origin:left;">Dark Venus MT5</div><svg style="position:absolute;left:53.0px;top:458.925px;" width="13" height="13" viewBox="0 0 13 13"><path d="M3 6 V9 Q6.5 11.2 10 9 V6" fill="#bfe0ff" stroke="#2d7dd2" stroke-width="1"/><path d="M0.5 4.5 L6.5 1.3 L12.5 4.5 L6.5 7.5 Z" fill="#bfe0ff" stroke="#2d7dd2" stroke-width="1"/><path d="M1.5 5 V10.5" stroke="#2d7dd2" stroke-width="1"/><circle cx="1.5" cy="11" r="1" fill="#2d7dd2"/></svg><svg style="position:absolute;left:22.5px;top:476.05px;" width="6" height="9" viewBox="0 0 6 9"><rect x="0" y="0" width="6" height="9" fill="#fff"/><path d="M1 1 L4.3 4.5 L1 8" stroke="#7a7a7a" stroke-width="1.1" fill="none"/></svg><svg style="position:absolute;left:31.5px;top:480.05px;" width="4" height="1" viewBox="0 0 4 1"><rect x="0" y="0" width="1" height="1" fill="#8a8a8a"/><rect x="2" y="0" width="1" height="1" fill="#8a8a8a"/></svg><div class="t" style="left:53.00px;top:475.59px;font-size:10px;color:#111;transform:scaleX(0.907);transform-origin:left;">Advisors</div><svg style="position:absolute;left:36.5px;top:474.55px;" width="13" height="13" viewBox="0 0 13 13"><path d="M0.7 1 H5 L5.8 2.5 H11.7 V11.2 H0.7 Z" fill="#f9cc00" stroke="#e0a800" stroke-width="0.8"/><path d="M0.7 3.2 H5.5" stroke="#e0a800" stroke-width="0.6"/></svg><svg style="position:absolute;left:22.5px;top:491.675px;" width="6" height="9" viewBox="0 0 6 9"><rect x="0" y="0" width="6" height="9" fill="#fff"/><path d="M1 1 L4.3 4.5 L1 8" stroke="#7a7a7a" stroke-width="1.1" fill="none"/></svg><svg style="position:absolute;left:31.5px;top:495.675px;" width="4" height="1" viewBox="0 0 4 1"><rect x="0" y="0" width="1" height="1" fill="#8a8a8a"/><rect x="2" y="0" width="1" height="1" fill="#8a8a8a"/></svg><div class="t" style="left:52.29px;top:491.21px;font-size:10px;color:#111;transform:scaleX(0.888);transform-origin:left;">Examples</div><svg style="position:absolute;left:36.5px;top:490.175px;" width="13" height="13" viewBox="0 0 13 13"><path d="M0.7 1 H5 L5.8 2.5 H11.7 V11.2 H0.7 Z" fill="#f9cc00" stroke="#e0a800" stroke-width="0.8"/><path d="M0.7 3.2 H5.5" stroke="#e0a800" stroke-width="0.6"/></svg><svg style="position:absolute;left:22.5px;top:507.3px;" width="6" height="9" viewBox="0 0 6 9"><rect x="0" y="0" width="6" height="9" fill="#fff"/><path d="M1 1 L4.3 4.5 L1 8" stroke="#7a7a7a" stroke-width="1.1" fill="none"/></svg><svg style="position:absolute;left:31.5px;top:511.3px;" width="4" height="1" viewBox="0 0 4 1"><rect x="0" y="0" width="1" height="1" fill="#8a8a8a"/><rect x="2" y="0" width="1" height="1" fill="#8a8a8a"/></svg><div class="t" style="left:52.28px;top:506.83px;font-size:10px;color:#111;transform:scaleX(0.899);transform-origin:left;">Free Robots</div><svg style="position:absolute;left:36.5px;top:505.8px;" width="13" height="13" viewBox="0 0 13 13"><path d="M0.7 1 H5 L5.8 2.5 H11.7 V11.2 H0.7 Z" fill="#f9cc00" stroke="#e0a800" stroke-width="0.8"/><path d="M0.7 3.2 H5.5" stroke="#e0a800" stroke-width="0.6"/></svg><svg style="position:absolute;left:6.0px;top:522.925px;" width="6" height="9" viewBox="0 0 6 9"><rect x="0" y="0" width="6" height="9" fill="#fff"/><path d="M1 1 L4.3 4.5 L1 8" stroke="#7a7a7a" stroke-width="1.1" fill="none"/></svg><svg style="position:absolute;left:15.0px;top:526.925px;" width="4" height="1" viewBox="0 0 4 1"><rect x="0" y="0" width="1" height="1" fill="#8a8a8a"/><rect x="2" y="0" width="1" height="1" fill="#8a8a8a"/></svg><div class="t" style="left:36.13px;top:522.46px;font-size:10px;color:#111;transform:scaleX(0.921);transform-origin:left;">Scripts</div><svg style="position:absolute;left:20.0px;top:521.425px;" width="13" height="13" viewBox="0 0 13 13"><path d="M3 1 H10.5 V9 Q10.5 11.5 8 11.5 H1.5 Q0.5 11.5 0.5 10.3 V9 H3 Z" fill="#f9c900" stroke="#dcab00" stroke-width="0.8"/></svg><div class="t" style="left:36.14px;top:538.08px;font-size:10px;color:#111;transform:scaleX(0.890);transform-origin:left;">Services</div><svg style="position:absolute;left:20.0px;top:537.05px;" width="13" height="13" viewBox="0 0 13 13"><circle cx="6.5" cy="6.5" r="4.8" fill="#bfe0ff" stroke="#2d7dd2" stroke-width="1.1" stroke-dasharray="2 0.9"/><circle cx="6.5" cy="6.5" r="2.8" fill="#fff" stroke="#2d7dd2" stroke-width="0.9"/><path d="M5.6 5 L8 6.5 L5.6 8 Z" fill="#2d7dd2"/></svg><svg style="position:absolute;left:6.0px;top:554.175px;" width="6" height="9" viewBox="0 0 6 9"><rect x="0" y="0" width="6" height="9" fill="#fff"/><path d="M1 1 L4.3 4.5 L1 8" stroke="#7a7a7a" stroke-width="1.1" fill="none"/></svg><svg style="position:absolute;left:15.0px;top:558.175px;" width="4" height="1" viewBox="0 0 4 1"><rect x="0" y="0" width="1" height="1" fill="#8a8a8a"/><rect x="2" y="0" width="1" height="1" fill="#8a8a8a"/></svg><div class="t" style="left:35.75px;top:553.71px;font-size:10px;color:#111;transform:scaleX(0.940);transform-origin:left;">Market</div><svg style="position:absolute;left:20.0px;top:552.675px;" width="13" height="13" viewBox="0 0 13 13"><path d="M4.5 3.5 V2.5 Q4.5 1 6 1 H7 Q8.5 1 8.5 2.5 V3.5" stroke="#d9a400" stroke-width="0.9" fill="none"/><path d="M2.5 3.8 H10.5 L11.8 12 H1.2 Z" fill="#f6c800" stroke="#dba700" stroke-width="0.7"/></svg><svg style="position:absolute;left:6.0px;top:569.8px;" width="6" height="9" viewBox="0 0 6 9"><rect x="0" y="0" width="6" height="9" fill="#fff"/><path d="M1 1 L4.3 4.5 L1 8" stroke="#7a7a7a" stroke-width="1.1" fill="none"/></svg><svg style="position:absolute;left:15.0px;top:573.8px;" width="4" height="1" viewBox="0 0 4 1"><rect x="0" y="0" width="1" height="1" fill="#8a8a8a"/><rect x="2" y="0" width="1" height="1" fill="#8a8a8a"/></svg><div class="t" style="left:36.14px;top:569.33px;font-size:10px;color:#111;transform:scaleX(0.903);transform-origin:left;">Signals</div><svg style="position:absolute;left:20.0px;top:568.3px;" width="14" height="13" viewBox="0 0 14 13"><g stroke="#2d75c4" stroke-width="0.9" fill="none"><path d="M2.4 3 Q0.5 6.5 2.4 10"/><path d="M4.2 4.3 Q3 6.5 4.2 8.7"/><path d="M11.6 3 Q13.5 6.5 11.6 10"/><path d="M9.8 4.3 Q11 6.5 9.8 8.7"/></g><circle cx="7" cy="6.5" r="1.3" fill="#2d75c4"/></svg><svg style="position:absolute;left:6.0px;top:585.425px;" width="6" height="9" viewBox="0 0 6 9"><rect x="0" y="0" width="6" height="9" fill="#fff"/><path d="M1 1 L4.3 4.5 L1 8" stroke="#7a7a7a" stroke-width="1.1" fill="none"/></svg><svg style="position:absolute;left:15.0px;top:589.425px;" width="4" height="1" viewBox="0 0 4 1"><rect x="0" y="0" width="1" height="1" fill="#8a8a8a"/><rect x="2" y="0" width="1" height="1" fill="#8a8a8a"/></svg><div class="t" style="left:36.50px;top:584.96px;font-size:10px;color:#111;transform:scaleX(0.840);transform-origin:left;">VPS</div><svg style="position:absolute;left:20.0px;top:583.925px;" width="14" height="13" viewBox="0 0 14 13"><path d="M3.2 8.5 Q0.8 8.5 0.9 6.5 Q1 4.6 3 4.5 Q3.6 1.6 6.8 1.6 Q9.8 1.6 10.5 4.5 Q13 4.6 13 6.6 Q13 8.5 10.8 8.5 Z" fill="#bfe0ff" stroke="#2d7dd2" stroke-width="1"/><path d="M7 8.5 V11.5 M1.5 11.5 H12.5" stroke="#2d7dd2" stroke-width="1"/></svg><div style="position:absolute;left:0px;top:631px;width:390px;height:23px;background:#f0f0f0"></div><div style="position:absolute;left:0px;top:631px;width:4.7px;height:1px;background:#222"></div><div style="position:absolute;left:59px;top:631px;width:328px;height:1px;background:#222"></div><div style="position:absolute;left:4.2px;top:631px;width:1px;height:15.8px;background:#222"></div><div style="position:absolute;left:58.5px;top:631px;width:1px;height:15.8px;background:#222"></div><div style="position:absolute;left:4.2px;top:646px;width:55.3px;height:1px;background:#222"></div><div class="t" style="left:11.50px;top:634.00px;font-size:9.8px;color:#111;transform:scaleX(1.020);transform-origin:left;">Common</div><div class="t" style="left:66.46px;top:634.00px;font-size:9.8px;color:#888;transform:scaleX(0.943);transform-origin:left;">Favorites</div><div style="position:absolute;left:390px;top:58.5px;width:1110px;height:575.5px;background:#fff"></div><div style="position:absolute;left:390px;top:58.5px;width:1110px;height:1px;background:#6e6e6e"></div><div style="position:absolute;left:390px;top:58.5px;width:1px;height:575.5px;background:#6e6e6e"></div><div style="position:absolute;left:391px;top:59.5px;width:1065px;height:30px;background:#f6f9fd"></div><div style="position:absolute;left:391px;top:89.6px;width:1095px;height:1px;background:#e1e8f0"></div><div style="position:absolute;left:1455.5px;top:59.5px;width:1px;height:30px;background:#e6ecf3"></div><div style="position:absolute;left:391px;top:88.6px;width:62.5px;height:2px;background:#3b8de0"></div><div class="t" style="left:400.29px;top:69.73px;font-size:10px;color:#1e1e1e;transform:scaleX(1.017);transform-origin:left;">Summary</div><div class="t" style="left:462.18px;top:69.73px;font-size:10px;color:#1e1e1e;transform:scaleX(1.031);transform-origin:left;">Profit &amp; Loss</div><div class="t" style="left:538.69px;top:69.73px;font-size:10px;color:#1e1e1e;transform:scaleX(1.007);transform-origin:left;">Long &amp; Short</div><div class="t" style="left:616.09px;top:69.73px;font-size:10px;color:#1e1e1e;transform:scaleX(1.023);transform-origin:left;">Symbols</div><div class="t" style="left:673.17px;top:69.73px;font-size:10px;color:#1e1e1e;transform:scaleX(1.041);transform-origin:left;">Risks</div><svg style="position:absolute;left:1463px;top:67px;" width="16" height="15" viewBox="0 0 16 15"><path d="M7.5 1.5 V10 M4 6.8 L7.5 10.2 L11 6.8" stroke="#2f6db5" stroke-width="1.4" fill="none"/><path d="M2 13 H13.5" stroke="#2f6db5" stroke-width="1.4"/></svg><div style="position:absolute;left:1486.5px;top:59.5px;width:1px;height:31px;background:#e8e8e8"></div><div style="position:absolute;left:1487.5px;top:59.5px;width:12.5px;height:574.5px;background:#fff"></div><svg style="position:absolute;left:1488.5px;top:62px;" width="9" height="8" viewBox="0 0 9 8"><path d="M0.5 7 L4.2 1 L8 7 Z" fill="#8a8a8a"/></svg><svg style="position:absolute;left:1488.5px;top:623px;" width="9" height="8" viewBox="0 0 9 8"><path d="M0.5 1 L4.2 7 L8 1 Z" fill="#8a8a8a"/></svg><div style="position:absolute;left:1489px;top:73.5px;width:6.8px;height:456.5px;background:#8a8a8a;border-radius:3.4px"></div><div style="position:absolute;left:1498.5px;top:59.5px;width:1px;height:574.5px;background:#e6e6e6"></div><svg style="position:absolute;left:400.5px;top:99px;" width="5" height="5" viewBox="0 0 5 5"><circle cx="2.5" cy="2.5" r="2.5" fill="#6db33f"/></svg><div class="t" style="left:408.67px;top:96.25px;font-size:8.8px;color:#222;transform:scaleX(0.978);transform-origin:left;">Gross Profit</div><div class="t" style="left:400.47px;top:109.59px;font-size:11px;color:#5f9463;transform:scaleX(0.971);transform-origin:left;">+683.51</div><div class="t" style="left:400.57px;top:162.69px;font-size:11px;color:#5f9463;transform:scaleX(1.006);transform-origin:left;">0.00</div><div class="t" style="left:400.66px;top:177.55px;font-size:8.8px;color:#222;transform:scaleX(0.977);transform-origin:left;">Swaps</div><div class="t" style="left:400.57px;top:228.19px;font-size:11px;color:#5f9463;transform:scaleX(1.006);transform-origin:left;">0.00</div><div class="t" style="left:400.30px;top:243.05px;font-size:8.8px;color:#222;">Dividends</div><svg style="position:absolute;left:788.5px;top:99px;" width="5" height="5" viewBox="0 0 5 5"><circle cx="2.5" cy="2.5" r="2.5" fill="#e8704a"/></svg><div class="t" style="left:796.56px;top:96.25px;font-size:8.8px;color:#222;transform:scaleX(0.993);transform-origin:left;">Gross Loss</div><div class="t" style="left:803.56px;top:109.59px;font-size:11px;color:#d9533a;">-142.60</div><div class="t" style="left:819.37px;top:228.19px;font-size:11px;color:#5f9463;transform:scaleX(1.006);transform-origin:left;">0.00</div><div class="t" style="left:787.56px;top:243.05px;font-size:8.8px;color:#222;transform:scaleX(1.008);transform-origin:left;">Commissions</div><svg style="position:absolute;left:530px;top:90px;" width="180" height="170" viewBox="0 0 180 170">
      <circle cx="90.89999999999998" cy="84.9" r="74.7" fill="none" stroke="#6ab04c" stroke-width="6.6"/>
      <path d="M90.89999999999998 17.5 A67.4 67.4 0 0 1 156.03 67.57" fill="none" stroke="#e8704a" stroke-width="6.6"/>
    </svg><div class="t" style="left:597.49px;top:160.98px;font-size:11.6px;color:#5b8a52;transform:scaleX(1.091);transform-origin:left;">+540.91</div><div class="t" style="left:611.57px;top:179.55px;font-size:8.8px;color:#222;transform:scaleX(1.036);transform-origin:left;">Total</div><div class="t" style="left:865.46px;top:97.55px;font-size:8.8px;color:#222;transform:scaleX(0.954);transform-origin:left;">Sharp Ratio</div><div style="position:absolute;left:866px;top:123.1px;width:293px;height:1px;background:#dde2ec"></div><div style="position:absolute;left:866px;top:114.1px;width:13.5px;height:9px;background:#fde9e9;box-sizing:border-box;"></div><div style="position:absolute;left:866px;top:114.1px;width:13.5px;height:9px;box-sizing:border-box;border:1px solid transparent;border-right:none;background:#ef7d5a border-box;-webkit-mask:linear-gradient(#000 0 0) border-box, linear-gradient(#000 0 0) padding-box;-webkit-mask-composite:xor;mask-composite:exclude;"></div><div style="position:absolute;left:878.5px;top:114.1px;width:1.3px;height:11px;background:#4a5360"></div><div style="position:absolute;left:868.5px;top:125.8px;width:22px;height:14.3px;background:#4a5360"></div><svg style="position:absolute;left:876.5px;top:123.3px;" width="6" height="3" viewBox="0 0 6 3"><path d="M0 3 L3 0 L6 3 Z" fill="#4a5360"/></svg><div class="t" style="left:871.84px;top:129.01px;font-size:7.9px;color:#fff;">0.23</div><div class="t" style="left:865.74px;top:129.62px;font-size:8.6px;color:#222;">0</div><div class="t" style="left:1154.53px;top:129.62px;font-size:8.6px;color:#222;">5</div><div class="t" style="left:865.10px;top:153.55px;font-size:8.8px;color:#222;">Profit Factor</div><div style="position:absolute;left:866px;top:179.1px;width:293px;height:1px;background:#dde2ec"></div><div style="position:absolute;left:866px;top:170.1px;width:233.79999999999995px;height:9px;background:linear-gradient(90deg,#fde9e9 0%,#fdebe6 17%,#fdf7dc 24%,#eef8e6 32%,#eaf6e3 100%);box-sizing:border-box;"></div><div style="position:absolute;left:866px;top:170.1px;width:233.79999999999995px;height:9px;box-sizing:border-box;border:1px solid transparent;border-right:none;background:linear-gradient(90deg,#ef7d5a 0%,#ef8a5a 17%,#f2d14a 24%,#7cc05a 32%,#6ab04c 100%) border-box;-webkit-mask:linear-gradient(#000 0 0) border-box, linear-gradient(#000 0 0) padding-box;-webkit-mask-composite:xor;mask-composite:exclude;"></div><div style="position:absolute;left:1098.8px;top:170.1px;width:1.3px;height:11px;background:#4a5360"></div><div style="position:absolute;left:1088.55px;top:181.79999999999998px;width:22.5px;height:14.3px;background:#4a5360"></div><svg style="position:absolute;left:1096.8px;top:179.29999999999998px;" width="6" height="3" viewBox="0 0 6 3"><path d="M0 3 L3 0 L6 3 Z" fill="#4a5360"/></svg><div class="t" style="left:1092.22px;top:185.01px;font-size:7.9px;color:#fff;">4.79</div><div class="t" style="left:865.74px;top:185.62px;font-size:8.6px;color:#222;">0</div><div class="t" style="left:1154.53px;top:185.62px;font-size:8.6px;color:#222;">6</div><div class="t" style="left:865.12px;top:209.55px;font-size:8.8px;color:#222;transform:scaleX(0.965);transform-origin:left;">Recovery Factor</div><div style="position:absolute;left:866px;top:235.1px;width:293px;height:1px;background:#dde2ec"></div><div style="position:absolute;left:866px;top:226.1px;width:169.20000000000005px;height:9px;background:linear-gradient(90deg,#fde9e9 0%,#fdebe6 24%,#fdf7dc 33%,#eef8e6 45%,#eaf6e3 100%);box-sizing:border-box;"></div><div style="position:absolute;left:866px;top:226.1px;width:169.20000000000005px;height:9px;box-sizing:border-box;border:1px solid transparent;border-right:none;background:linear-gradient(90deg,#ef7d5a 0%,#ef8a5a 24%,#f2d14a 33%,#7cc05a 45%,#6ab04c 100%) border-box;-webkit-mask:linear-gradient(#000 0 0) border-box, linear-gradient(#000 0 0) padding-box;-webkit-mask-composite:xor;mask-composite:exclude;"></div><div style="position:absolute;left:1034.2px;top:226.1px;width:1.3px;height:11px;background:#4a5360"></div><div style="position:absolute;left:1023.95px;top:237.79999999999998px;width:22.5px;height:14.3px;background:#4a5360"></div><svg style="position:absolute;left:1032.2px;top:235.29999999999998px;" width="6" height="3" viewBox="0 0 6 3"><path d="M0 3 L3 0 L6 3 Z" fill="#4a5360"/></svg><div class="t" style="left:1027.54px;top:241.01px;font-size:7.9px;color:#fff;">4.04</div><div class="t" style="left:865.74px;top:241.62px;font-size:8.6px;color:#222;">0</div><div class="t" style="left:1154.61px;top:241.62px;font-size:8.6px;color:#222;">7</div><div class="t" style="left:1183.30px;top:97.55px;font-size:8.8px;color:#222;transform:scaleX(0.994);transform-origin:left;">Max. Drawdown</div><div style="position:absolute;left:1184px;top:123.1px;width:293px;height:1px;background:#dde2ec"></div><div style="position:absolute;left:1184px;top:114.1px;width:110px;height:9px;background:linear-gradient(90deg,#eaf6e3 0%,#eef8e6 20%,#fdf7dc 36%,#fdebe6 48%,#fde9e9 100%);box-sizing:border-box;"></div><div style="position:absolute;left:1184px;top:114.1px;width:110px;height:9px;box-sizing:border-box;border:1px solid transparent;border-right:none;background:linear-gradient(90deg,#6ab04c 0%,#7cc05a 20%,#f2d14a 36%,#ef8a5a 48%,#ef7d5a 100%) border-box;-webkit-mask:linear-gradient(#000 0 0) border-box, linear-gradient(#000 0 0) padding-box;-webkit-mask-composite:xor;mask-composite:exclude;"></div><div style="position:absolute;left:1293px;top:114.1px;width:1.3px;height:11px;background:#4a5360"></div><div style="position:absolute;left:1278.25px;top:125.8px;width:31.5px;height:14.3px;background:#4a5360"></div><svg style="position:absolute;left:1291px;top:123.3px;" width="6" height="3" viewBox="0 0 6 3"><path d="M0 3 L3 0 L6 3 Z" fill="#4a5360"/></svg><div class="t" style="left:1280.60px;top:129.01px;font-size:7.9px;color:#fff;">37.46%</div><div class="t" style="left:1183.74px;top:129.62px;font-size:8.6px;color:#222;">0%</div><div class="t" style="left:1183.31px;top:153.55px;font-size:8.8px;color:#222;transform:scaleX(0.984);transform-origin:left;">Max. Deposit Load</div><div style="position:absolute;left:1184px;top:179.1px;width:293px;height:1px;background:#dde2ec"></div><div style="position:absolute;left:1184px;top:170.1px;width:141.5px;height:9px;background:linear-gradient(90deg,#eaf6e3 0%,#eef8e6 8%,#fdf7dc 16%,#fdebe6 27%,#fde9e9 100%);box-sizing:border-box;"></div><div style="position:absolute;left:1184px;top:170.1px;width:141.5px;height:9px;box-sizing:border-box;border:1px solid transparent;border-right:none;background:linear-gradient(90deg,#6ab04c 0%,#7cc05a 8%,#f2d14a 16%,#ef8a5a 27%,#ef7d5a 100%) border-box;-webkit-mask:linear-gradient(#000 0 0) border-box, linear-gradient(#000 0 0) padding-box;-webkit-mask-composite:xor;mask-composite:exclude;"></div><div style="position:absolute;left:1324.5px;top:170.1px;width:1.3px;height:11px;background:#4a5360"></div><div style="position:absolute;left:1309.75px;top:181.79999999999998px;width:31.5px;height:14.3px;background:#4a5360"></div><svg style="position:absolute;left:1322.5px;top:179.29999999999998px;" width="6" height="3" viewBox="0 0 6 3"><path d="M0 3 L3 0 L6 3 Z" fill="#4a5360"/></svg><div class="t" style="left:1312.06px;top:185.01px;font-size:7.9px;color:#fff;">96.37%</div><div class="t" style="left:1183.74px;top:185.62px;font-size:8.6px;color:#222;">0%</div><div class="t" style="left:1455.26px;top:185.62px;font-size:8.6px;color:#222;">200%</div><div class="t" style="left:1183.83px;top:209.55px;font-size:8.8px;color:#222;transform:scaleX(0.956);transform-origin:left;">Trades per Week</div><div style="position:absolute;left:1184px;top:235.1px;width:140px;height:1px;background:#dde2ec"></div><div style="position:absolute;left:1184px;top:226.1px;width:93.29999999999995px;height:9px;background:#f3f5fa;box-sizing:border-box;"></div><div style="position:absolute;left:1184px;top:226.1px;width:93.29999999999995px;height:9px;box-sizing:border-box;border:1px solid transparent;border-right:none;background:#c9d2e2 border-box;-webkit-mask:linear-gradient(#000 0 0) border-box, linear-gradient(#000 0 0) padding-box;-webkit-mask-composite:xor;mask-composite:exclude;"></div><div style="position:absolute;left:1276.3px;top:226.1px;width:1.3px;height:11px;background:#4a5360"></div><div style="position:absolute;left:1269.55px;top:237.79999999999998px;width:15.5px;height:14.3px;background:#4a5360"></div><svg style="position:absolute;left:1274.3px;top:235.29999999999998px;" width="6" height="3" viewBox="0 0 6 3"><path d="M0 3 L3 0 L6 3 Z" fill="#4a5360"/></svg><div class="t" style="left:1272.85px;top:241.01px;font-size:7.9px;color:#fff;">26</div><div class="t" style="left:1183.74px;top:241.62px;font-size:8.6px;color:#222;">0</div><div class="t" style="left:1314.83px;top:241.62px;font-size:8.6px;color:#222;">39</div><div class="t" style="left:1337.20px;top:209.55px;font-size:8.8px;color:#222;transform:scaleX(0.973);transform-origin:left;">Average Hold Time</div><div style="position:absolute;left:1337.3px;top:235.1px;width:139.70000000000005px;height:1px;background:#dde2ec"></div><div style="position:absolute;left:1337.3px;top:226.1px;width:2.2000000000000455px;height:9px;background:#f3f5fa;box-sizing:border-box;"></div><div style="position:absolute;left:1337.3px;top:226.1px;width:2.2000000000000455px;height:9px;box-sizing:border-box;border:1px solid transparent;border-right:none;background:#c9d2e2 border-box;-webkit-mask:linear-gradient(#000 0 0) border-box, linear-gradient(#000 0 0) padding-box;-webkit-mask-composite:xor;mask-composite:exclude;"></div><div style="position:absolute;left:1338.5px;top:226.1px;width:1.3px;height:11px;background:#4a5360"></div><div style="position:absolute;left:1337px;top:237.79999999999998px;width:20px;height:14.3px;background:#4a5360"></div><svg style="position:absolute;left:1336.5px;top:235.29999999999998px;" width="6" height="3" viewBox="0 0 6 3"><path d="M0 3 L3 0 L6 3 Z" fill="#4a5360"/></svg><div class="t" style="left:1339.37px;top:241.01px;font-size:7.9px;color:#fff;">26m</div><div class="t" style="left:1467.92px;top:241.62px;font-size:8.6px;color:#222;">1d</div><div style="position:absolute;left:1401.6px;top:91px;width:85px;height:67.7px;background:#fff;box-shadow:0 6px 18px 4px rgba(150,160,185,0.22);"></div><div class="t" style="left:1410.60px;top:106.70px;font-size:9.8px;color:#4577b8;transform:scaleX(1.029);transform-origin:left;">Save as HTML</div><div class="t" style="left:1410.61px;top:134.70px;font-size:9.8px;color:#4577b8;">Save as PDF</div><div class="t" style="left:400.75px;top:360.09px;font-size:11px;color:#222;transform:scaleX(1.018);transform-origin:left;">851.54</div><svg style="position:absolute;left:401px;top:376.5px;" width="5" height="5" viewBox="0 0 5 5"><circle cx="2.5" cy="2.5" r="2.2" fill="#5b9be0"/></svg><div class="t" style="left:409.30px;top:374.55px;font-size:8.8px;color:#8a8a8a;transform:scaleX(0.991);transform-origin:left;">Balance</div><div class="t" style="left:465.55px;top:360.09px;font-size:11px;color:#222;transform:scaleX(1.021);transform-origin:left;">844.45</div><svg style="position:absolute;left:466px;top:376.5px;" width="5" height="5" viewBox="0 0 5 5"><circle cx="2.5" cy="2.5" r="2.2" fill="#9b5de5"/></svg><div class="t" style="left:474.30px;top:374.55px;font-size:8.8px;color:#8a8a8a;transform:scaleX(0.989);transform-origin:left;">Equity</div><div style="position:absolute;left:1375.5px;top:359px;width:51.5px;height:25px;background:#579de9"></div><div style="position:absolute;left:1427px;top:359px;width:50.5px;height:25px;box-sizing:border-box;border:1px solid #eeeeee;border-left:none;background:#fff"></div><div class="t" style="left:1384.31px;top:366.87px;font-size:9.6px;color:#fff;transform:scaleX(0.968);transform-origin:left;">Balance</div><div class="t" style="left:1436.26px;top:366.87px;font-size:9.6px;color:#222;transform:scaleX(1.019);transform-origin:left;">Growth</div><div style="position:absolute;left:401px;top:407px;width:1043px;height:1px;background:#eceef1"></div><div class="t" style="left:1448.19px;top:401.87px;font-size:9.6px;color:#222;transform:scaleX(1.203);transform-origin:left;">1k</div><div style="position:absolute;left:401px;top:447px;width:1043px;height:1px;background:#eceef1"></div><div class="t" style="left:1448.60px;top:441.87px;font-size:9.6px;color:#222;transform:scaleX(1.047);transform-origin:left;">800</div><div style="position:absolute;left:401px;top:487px;width:1043px;height:1px;background:#eceef1"></div><div class="t" style="left:1448.49px;top:481.87px;font-size:9.6px;color:#222;transform:scaleX(1.053);transform-origin:left;">600</div><div style="position:absolute;left:401px;top:527px;width:1043px;height:1px;background:#eceef1"></div><div class="t" style="left:1448.80px;top:521.87px;font-size:9.6px;color:#222;transform:scaleX(1.034);transform-origin:left;">400</div><div style="position:absolute;left:401px;top:567px;width:1043px;height:1px;background:#eceef1"></div><div class="t" style="left:1448.49px;top:561.87px;font-size:9.6px;color:#222;transform:scaleX(1.053);transform-origin:left;">200</div><div style="position:absolute;left:401px;top:607px;width:1043px;height:1px;background:#eceef1"></div><div class="t" style="left:1448.71px;top:601.87px;font-size:9.6px;color:#222;">0.00</div><div style="position:absolute;left:401px;top:624.3px;width:1043px;height:1px;background:#e3e6ea"></div><div style="position:absolute;left:401px;top:624.3px;width:1px;height:4.6px;background:#e6e8eb"></div><div style="position:absolute;left:516px;top:624.3px;width:1px;height:4.6px;background:#e6e8eb"></div><div style="position:absolute;left:630px;top:624.3px;width:1px;height:4.6px;background:#e6e8eb"></div><div style="position:absolute;left:744px;top:624.3px;width:1px;height:4.6px;background:#e6e8eb"></div><div style="position:absolute;left:858px;top:624.3px;width:1px;height:4.6px;background:#e6e8eb"></div><div style="position:absolute;left:972px;top:624.3px;width:1px;height:4.6px;background:#e6e8eb"></div><div style="position:absolute;left:1086px;top:624.3px;width:1px;height:4.6px;background:#e6e8eb"></div><div style="position:absolute;left:1200px;top:624.3px;width:1px;height:4.6px;background:#e6e8eb"></div><div style="position:absolute;left:1314px;top:624.3px;width:1px;height:4.6px;background:#e6e8eb"></div><div style="position:absolute;left:1433px;top:624.3px;width:1px;height:4.6px;background:#e6e8eb"></div><div style="position:absolute;left:391px;top:631px;width:1095px;height:2.4px;overflow:hidden"><div class="t" style="left:3.0px;top:-0.53px;font-size:9.6px;color:#222;width:60px;text-align:center">2025.12.01</div><div class="t" style="left:95.0px;top:-0.53px;font-size:9.6px;color:#222;width:60px;text-align:center">2025.12.07</div><div class="t" style="left:209.0px;top:-0.53px;font-size:9.6px;color:#222;width:60px;text-align:center">2025.12.13</div><div class="t" style="left:323.0px;top:-0.53px;font-size:9.6px;color:#222;width:60px;text-align:center">2025.12.19</div><div class="t" style="left:437.0px;top:-0.53px;font-size:9.6px;color:#222;width:60px;text-align:center">2025.12.25</div><div class="t" style="left:551.0px;top:-0.53px;font-size:9.6px;color:#222;width:60px;text-align:center">2025.12.31</div><div class="t" style="left:665.0px;top:-0.53px;font-size:9.6px;color:#222;width:60px;text-align:center">2026.01.06</div><div class="t" style="left:779.0px;top:-0.53px;font-size:9.6px;color:#222;width:60px;text-align:center">2026.01.12</div><div class="t" style="left:893.0px;top:-0.53px;font-size:9.6px;color:#222;width:60px;text-align:center">2026.01.18</div><div class="t" style="left:1007.0px;top:-0.53px;font-size:9.6px;color:#222;width:60px;text-align:center">2026.01.24</div></div><div style="position:absolute;left:743.6px;top:391px;width:1px;height:233.5px;background:#93bdf0"></div><svg style="position:absolute;left:391px;top:380px;" width="1100" height="254" viewBox="0 0 1100 254">
      <g transform="translate(-391,-380)">
      <path d="M401 607.6 H499 C504.5 607.6 509.5 545.6 516 545.6 H973 C979 545.6 985 562.8 992 562.8 H1409.5 C1413.5 562.8 1420 437 1428 437 H1433.5" fill="none" stroke="#5a9cf0" stroke-width="2"/>
      <path d="M516 545.6 H973 C979 545.6 985 562.8 992 562.8 H1409.5 C1413.5 562.8 1420 438.4 1428 438.4 H1433.5" fill="none" stroke="#9d5ce8" stroke-width="2"/>
      <circle cx="744" cy="545.6" r="3" fill="#9d5ce8" stroke="#fff" stroke-width="1"/>
      </g>
    </svg><div style="position:absolute;left:754.1px;top:580.8px;width:98.3px;height:51.2px;background:#4a5260"></div><div class="t" style="left:760.60px;top:585.89px;font-size:8.4px;color:#fff;transform:scaleX(0.958);transform-origin:left;">2025.12.19</div><svg style="position:absolute;left:761.5px;top:601.5px;" width="5" height="5" viewBox="0 0 5 5"><circle cx="2.5" cy="2.5" r="2.2" fill="#5b9be0"/></svg><div class="t" style="left:771.86px;top:600.19px;font-size:8.4px;color:#fff;transform:scaleX(0.953);transform-origin:left;">Balance</div><div class="t" style="left:820.05px;top:600.19px;font-size:8.4px;color:#fff;transform:scaleX(0.975);transform-origin:left;">310.63</div><svg style="position:absolute;left:761.5px;top:615.5px;" width="5" height="5" viewBox="0 0 5 5"><circle cx="2.5" cy="2.5" r="2.2" fill="#9b5de5"/></svg><div class="t" style="left:771.80px;top:614.19px;font-size:8.4px;color:#fff;transform:scaleX(1.036);transform-origin:left;">Equity</div><div class="t" style="left:820.05px;top:614.19px;font-size:8.4px;color:#fff;transform:scaleX(0.975);transform-origin:left;">310.63</div><div style="position:absolute;left:390px;top:633.5px;width:1110px;height:1.2px;background:#1e1e1e"></div><div style="position:absolute;left:390px;top:634.7px;width:1110px;height:19.5px;background:#f0f0f0"></div><div class="t" style="left:400.52px;top:637.62px;font-size:9.9px;color:#858585;transform:scaleX(0.893);transform-origin:left;">XAUUSD.ecn,M5</div><div style="position:absolute;left:477px;top:636.3px;width:1px;height:11.5px;background:#777"></div><div class="t" style="left:487.31px;top:637.62px;font-size:9.9px;color:#858585;transform:scaleX(0.877);transform-origin:left;">BTCUSD.ecn,H1</div><div style="position:absolute;left:562px;top:636.3px;width:1px;height:11.5px;background:#777"></div><div class="t" style="left:570.82px;top:637.62px;font-size:9.9px;color:#858585;transform:scaleX(0.893);transform-origin:left;">XAUUSD.ecn,M5</div><div style="position:absolute;left:647.5px;top:636.3px;width:1px;height:11.5px;background:#777"></div><svg style="position:absolute;left:658px;top:636px;" width="12" height="13" viewBox="0 0 12 13"><path d="M3.8 3.8 V2.6 Q3.8 1 5.5 1 H6.5 Q8.2 1 8.2 2.6 V3.8" stroke="#d9a400" stroke-width="0.9" fill="none"/><path d="M2 4 H10 L11.2 12.2 H0.8 Z" fill="#f6c800" stroke="#dba700" stroke-width="0.7"/></svg><div class="t" style="left:675.25px;top:637.62px;font-size:9.9px;color:#858585;transform:scaleX(0.950);transform-origin:left;">Market</div><div style="position:absolute;left:716px;top:633.5px;width:65px;height:15px;box-sizing:border-box;border:1px solid #1e1e1e;border-top:none;background:#fff"></div><svg style="position:absolute;left:723.5px;top:635.5px;" width="14" height="13" viewBox="0 0 14 13"><path d="M5.5 1.2 Q0.6 3.5 1 7.5 Q1.6 11 5.2 12" stroke="#1f6fc0" stroke-width="1.4" fill="none"/><path d="M6 3.5 Q3.5 5.5 3.8 8 Q4.2 10 5.8 10.8" stroke="#1f6fc0" stroke-width="1" fill="none"/><path d="M7.5 1.5 H12.5 M7.5 3.3 H12.5" stroke="#1f6fc0" stroke-width="1"/><path d="M7 5.5 H12.5 Q12.5 11 7 12 Z" fill="#1f6fc0"/><path d="M8.3 10.5 Q9 7.5 11.3 6.8" stroke="#fff" stroke-width="0.9" fill="none"/></svg><div class="t" style="left:739.97px;top:636.50px;font-size:9.8px;color:#111;transform:scaleX(0.933);transform-origin:left;">Reports</div><svg style="position:absolute;left:1468px;top:638px;" width="8" height="9" viewBox="0 0 8 9"><path d="M6 1 L2 4.5 L6 8 Z" fill="#c4c4c4"/></svg><svg style="position:absolute;left:1484px;top:638px;" width="8" height="9" viewBox="0 0 8 9"><path d="M2 1 L6 4.5 L2 8 Z" fill="#c4c4c4"/></svg><div style="position:absolute;left:390px;top:654px;width:1110px;height:1px;background:#d6d6d6"></div><div style="position:absolute;left:0px;top:654px;width:1500px;height:115.5px;background:#fff"></div><div style="position:absolute;left:0px;top:654px;width:13px;height:135px;background:#bfcddb"></div><svg style="position:absolute;left:3px;top:659.5px;" width="7" height="7" viewBox="0 0 7 7"><path d="M0.5 0.5 L6.5 6.5 M6.5 0.5 L0.5 6.5" stroke="#111" stroke-width="1.2"/></svg><div class="t" style="left:-9.5px;top:764.5px;font-size:9.8px;color:#333;transform:rotate(-90deg) scaleX(0.93);transform-origin:center;width:31px;text-align:center;line-height:10px">Toolbox</div><div style="position:absolute;left:13px;top:654px;width:1px;height:115.5px;background:#e0e0e0"></div><div style="position:absolute;left:191px;top:655px;width:1px;height:33px;background:#e4e4e4"></div><div style="position:absolute;left:315px;top:655px;width:1px;height:33px;background:#e4e4e4"></div><div style="position:absolute;left:424px;top:655px;width:1px;height:33px;background:#e4e4e4"></div><div style="position:absolute;left:562px;top:655px;width:1px;height:33px;background:#e4e4e4"></div><div style="position:absolute;left:699px;top:655px;width:1px;height:33px;background:#e4e4e4"></div><div style="position:absolute;left:837px;top:655px;width:1px;height:33px;background:#e4e4e4"></div><div style="position:absolute;left:974px;top:655px;width:1px;height:33px;background:#e4e4e4"></div><div style="position:absolute;left:1112px;top:655px;width:1px;height:33px;background:#e4e4e4"></div><div style="position:absolute;left:1249px;top:655px;width:1px;height:33px;background:#e4e4e4"></div><div class="t" style="left:18.10px;top:658.70px;font-size:9.8px;color:#111;transform:scaleX(1.026);transform-origin:left;">Symbol</div><svg style="position:absolute;left:63px;top:661px;" width="7" height="5" viewBox="0 0 7 5"><path d="M0.5 4.5 L3.5 0.8 L6.5 4.5 Z" fill="#111"/></svg><div class="t" style="left:196.81px;top:658.70px;font-size:9.8px;color:#111;transform:scaleX(0.977);transform-origin:left;">Ticket</div><div class="t" style="left:399.31px;top:658.70px;font-size:9.8px;color:#111;transform:scaleX(0.983);transform-origin:left;">Time</div><div class="t" style="left:535.80px;top:658.70px;font-size:9.8px;color:#111;transform:scaleX(1.015);transform-origin:left;">Type</div><div class="t" style="left:660.50px;top:658.70px;font-size:9.8px;color:#111;transform:scaleX(1.036);transform-origin:left;">Volume</div><div class="t" style="left:810.70px;top:658.70px;font-size:9.8px;color:#111;transform:scaleX(1.015);transform-origin:left;">Price</div><div class="t" style="left:949.09px;top:658.70px;font-size:9.8px;color:#111;transform:scaleX(1.051);transform-origin:left;">S / L</div><div class="t" style="left:1086.30px;top:658.70px;font-size:9.8px;color:#111;transform:scaleX(1.023);transform-origin:left;">T / P</div><div class="t" style="left:1222.70px;top:658.70px;font-size:9.8px;color:#111;transform:scaleX(1.015);transform-origin:left;">Price</div><div class="t" style="left:1471.18px;top:658.70px;font-size:9.8px;color:#111;transform:scaleX(1.040);transform-origin:left;">Profit</div><svg style="position:absolute;left:16.5px;top:674.5px;" width="9" height="12" viewBox="0 0 9 12"><rect x="0.8" y="0.8" width="7.4" height="10.4" rx="1.5" fill="#fff" stroke="#e04848" stroke-width="1"/><path d="M3 4 H6 M3 6.5 H6" stroke="#e04848" stroke-width="0.9"/></svg><div class="t" style="left:29.91px;top:675.20px;font-size:9.8px;color:#111;transform:scaleX(0.921);transform-origin:left;">xauusd</div><div class="t" style="left:194.40px;top:675.20px;font-size:9.8px;color:#111;transform:scaleX(0.871);transform-origin:left;">1441318762</div><div class="t" style="left:343.57px;top:675.20px;font-size:9.8px;color:#111;transform:scaleX(0.876);transform-origin:left;">2026.01.23 22:30:00</div><div class="t" style="left:544.31px;top:675.20px;font-size:9.8px;color:#111;transform:scaleX(0.971);transform-origin:left;">sell</div><div class="t" style="left:677.22px;top:675.20px;font-size:9.8px;color:#111;transform:scaleX(0.955);transform-origin:left;">0.01</div><div class="t" style="left:802.82px;top:675.20px;font-size:9.8px;color:#111;transform:scaleX(0.910);transform-origin:left;">4979.11</div><div class="t" style="left:926.65px;top:675.20px;font-size:9.8px;color:#111;transform:scaleX(0.894);transform-origin:left;">5013.40</div><div class="t" style="left:1063.83px;top:675.20px;font-size:9.8px;color:#111;transform:scaleX(0.889);transform-origin:left;">4947.40</div><div class="t" style="left:1215.83px;top:675.20px;font-size:9.8px;color:#111;transform:scaleX(0.891);transform-origin:left;">4986.39</div><div class="t" style="left:1461.63px;top:675.20px;font-size:9.8px;color:#f01a1a;transform:scaleX(0.949);transform-origin:left;">-7.28</div><svg style="position:absolute;left:964px;top:677px;" width="7" height="7" viewBox="0 0 7 7"><path d="M0.8 0.8 L6.2 6.2 M6.2 0.8 L0.8 6.2" stroke="#7a7a7a" stroke-width="1.1"/></svg><svg style="position:absolute;left:1102px;top:677px;" width="7" height="7" viewBox="0 0 7 7"><path d="M0.8 0.8 L6.2 6.2 M6.2 0.8 L0.8 6.2" stroke="#7a7a7a" stroke-width="1.1"/></svg><svg style="position:absolute;left:1488px;top:677px;" width="7" height="7" viewBox="0 0 7 7"><path d="M0.8 0.8 L6.2 6.2 M6.2 0.8 L0.8 6.2" stroke="#7a7a7a" stroke-width="1.1"/></svg><div style="position:absolute;left:14px;top:688.3px;width:1486px;height:15.8px;background:#c8c8c8"></div><svg style="position:absolute;left:16.5px;top:691px;" width="11" height="11" viewBox="0 0 11 11"><circle cx="5.5" cy="5.5" r="4.6" fill="none" stroke="#222" stroke-width="1"/><path d="M3 5.5 H8" stroke="#222" stroke-width="1"/></svg><div class="t" style="left:29.95px;top:691.70px;font-size:9.8px;color:#111;font-weight:bold;transform:scaleX(0.934);transform-origin:left;white-space:pre;">Balance: 851.54 USD  Equity: 844.45  Margin: 9.96  Free Margin: 834.49  Margin Level: 8 478.41 %</div><div class="t" style="left:1460.20px;top:691.70px;font-size:9.8px;color:#111;font-weight:bold;transform:scaleX(1.037);transform-origin:left;">-7.09</div><div style="position:absolute;left:13px;top:769.3px;width:1487px;height:19.5px;background:#f0f0f0"></div><div style="position:absolute;left:13px;top:769.3px;width:5px;height:1.2px;background:#222"></div><div style="position:absolute;left:56px;top:769.3px;width:1444px;height:1.2px;background:#222"></div><div style="position:absolute;left:17.5px;top:769.3px;width:1px;height:15.5px;background:#222"></div><div style="position:absolute;left:55.5px;top:769.3px;width:1px;height:15.5px;background:#222"></div><div style="position:absolute;left:17.5px;top:784px;width:39px;height:1px;background:#222"></div><div style="position:absolute;left:18.5px;top:770.5px;width:37px;height:13.5px;background:#fff"></div><div class="t" style="left:25.82px;top:771.90px;font-size:9.8px;color:#111;transform:scaleX(0.911);transform-origin:left;">Trade</div><div class="t" style="left:63.30px;top:771.90px;font-size:9.8px;color:#888;transform:scaleX(0.894);transform-origin:left;">Exposure</div><div class="t" style="left:115.21px;top:771.90px;font-size:9.8px;color:#888;transform:scaleX(1.010);transform-origin:left;">History</div><div class="t" style="left:161.26px;top:771.90px;font-size:9.8px;color:#888;transform:scaleX(0.939);transform-origin:left;">News</div><div class="t" style="left:211.21px;top:771.90px;font-size:9.8px;color:#888;">Mailbox</div><div class="t" style="left:271.55px;top:771.90px;font-size:9.8px;color:#888;transform:scaleX(0.919);transform-origin:left;">Calendar</div><div class="t" style="left:324.02px;top:771.90px;font-size:9.8px;color:#888;transform:scaleX(0.977);transform-origin:left;">Company</div><div class="t" style="left:380.50px;top:771.90px;font-size:9.8px;color:#888;transform:scaleX(0.949);transform-origin:left;">Alerts</div><div class="t" style="left:419.00px;top:771.90px;font-size:9.8px;color:#888;transform:scaleX(0.974);transform-origin:left;">Articles</div><div class="t" style="left:465.05px;top:771.90px;font-size:9.8px;color:#888;transform:scaleX(0.913);transform-origin:left;">Code Base</div><div class="t" style="left:523.29px;top:771.90px;font-size:9.8px;color:#888;transform:scaleX(0.902);transform-origin:left;">Experts</div><div class="t" style="left:568.91px;top:771.90px;font-size:9.8px;color:#888;transform:scaleX(0.923);transform-origin:left;">Journal</div><div style="position:absolute;left:109px;top:772.5px;width:1px;height:12.5px;background:#888"></div><div style="position:absolute;left:154.5px;top:772.5px;width:1px;height:12.5px;background:#888"></div><div style="position:absolute;left:204.5px;top:772.5px;width:1px;height:12.5px;background:#888"></div><div style="position:absolute;left:264.5px;top:772.5px;width:1px;height:12.5px;background:#888"></div><div style="position:absolute;left:316.5px;top:772.5px;width:1px;height:12.5px;background:#888"></div><div style="position:absolute;left:373px;top:772.5px;width:1px;height:12.5px;background:#888"></div><div style="position:absolute;left:412px;top:772.5px;width:1px;height:12.5px;background:#888"></div><div style="position:absolute;left:458px;top:772.5px;width:1px;height:12.5px;background:#888"></div><div style="position:absolute;left:516.5px;top:772.5px;width:1px;height:12.5px;background:#888"></div><div style="position:absolute;left:561.5px;top:772.5px;width:1px;height:12.5px;background:#888"></div><div class="t" style="left:185.93px;top:776.07px;font-size:7.6px;color:#e8322e;font-weight:bold;transform:scaleX(0.864);transform-origin:left;">47</div><div class="t" style="left:245.57px;top:776.07px;font-size:7.6px;color:#e8322e;font-weight:bold;transform:scaleX(0.949);transform-origin:left;">11</div><svg style="position:absolute;left:1306px;top:772.5px;" width="11" height="12" viewBox="0 0 11 12"><path d="M3.5 3.8 V2.6 Q3.5 1 5.2 1 H5.8 Q7.5 1 7.5 2.6 V3.8" stroke="#d9a400" stroke-width="0.9" fill="none"/><path d="M1.8 4 H9.2 L10.3 11.5 H0.7 Z" fill="#f6c800" stroke="#dba700" stroke-width="0.7"/></svg><div class="t" style="left:1319.73px;top:773.70px;font-size:9.8px;color:#111;transform:scaleX(0.976);transform-origin:left;">Market</div><svg style="position:absolute;left:1358px;top:773px;" width="14" height="11" viewBox="0 0 14 11"><g stroke="#2d75c4" stroke-width="0.9" fill="none"><path d="M2.4 1.5 Q0.5 5 2.4 8.5"/><path d="M4.2 2.8 Q3 5 4.2 7.2"/><path d="M11.6 1.5 Q13.5 5 11.6 8.5"/><path d="M9.8 2.8 Q11 5 9.8 7.2"/></g><circle cx="7" cy="5" r="1.3" fill="#2d75c4"/></svg><div class="t" style="left:1373.64px;top:773.70px;font-size:9.8px;color:#111;transform:scaleX(0.922);transform-origin:left;">Signals</div><svg style="position:absolute;left:1412px;top:772px;" width="14" height="13" viewBox="0 0 14 13"><path d="M3.2 8.5 Q0.8 8.5 0.9 6.5 Q1 4.6 3 4.5 Q3.6 1.6 6.8 1.6 Q9.8 1.6 10.5 4.5 Q13 4.6 13 6.6 Q13 8.5 10.8 8.5 Z" fill="#bfe0ff" stroke="#2d7dd2" stroke-width="1"/><path d="M7 8.5 V11.5 M1.5 11.5 H12.5" stroke="#2d7dd2" stroke-width="1"/></svg><div class="t" style="left:1428.00px;top:773.70px;font-size:9.8px;color:#111;transform:scaleX(0.805);transform-origin:left;">VPS</div><svg style="position:absolute;left:1452px;top:772px;" width="10" height="13" viewBox="0 0 10 13"><path d="M6 1.5 A5 5 0 0 0 6 11.5" stroke="#2d7dd2" stroke-width="1.6" fill="none" stroke-dasharray="1.8 1"/></svg><div class="t" style="left:1479.89px;top:773.70px;font-size:9.8px;color:#111;transform:scaleX(1.115);transform-origin:left;">ter</div><div style="position:absolute;left:0px;top:788.5px;width:1500px;height:1px;background:#d4d4d4"></div><div style="position:absolute;left:0px;top:789.5px;width:1500px;height:16.5px;background:#f0f0f0"></div><div class="t" style="left:0.80px;top:792.90px;font-size:9.8px;color:#111;transform:scaleX(0.895);transform-origin:left;">For Help, press F1</div><div style="position:absolute;left:958px;top:791px;width:1px;height:15px;background:#a0a0a0"></div><div style="position:absolute;left:1058px;top:791px;width:1px;height:15px;background:#a0a0a0"></div><div style="position:absolute;left:1135px;top:791px;width:1px;height:15px;background:#a0a0a0"></div><div style="position:absolute;left:1190px;top:791px;width:1px;height:15px;background:#a0a0a0"></div><div style="position:absolute;left:1246px;top:791px;width:1px;height:15px;background:#a0a0a0"></div><div style="position:absolute;left:1299px;top:791px;width:1px;height:15px;background:#a0a0a0"></div><div style="position:absolute;left:1354px;top:791px;width:1px;height:15px;background:#a0a0a0"></div><div style="position:absolute;left:1405px;top:791px;width:1px;height:15px;background:#a0a0a0"></div><div class="t" style="left:962.21px;top:792.90px;font-size:9.8px;color:#111;transform:scaleX(1.007);transform-origin:left;">Default</div><svg style="position:absolute;left:1409px;top:791.5px;" width="12" height="12" viewBox="0 0 12 12"><rect x="1" y="8" width="1.5" height="2.5" fill="#3cb043"/><rect x="3.5" y="6" width="1.5" height="4.5" fill="#3cb043"/><rect x="6" y="4" width="1.5" height="6.5" fill="#3cb043"/><rect x="8.5" y="2" width="1.5" height="8.5" fill="#d8d8d8"/></svg><div class="t" style="left:1425.06px;top:792.90px;font-size:9.8px;color:#111;transform:scaleX(0.900);transform-origin:left;">232.85 ms</div><svg style="position:absolute;left:1453.5px;top:762px;" width="36" height="36" viewBox="0 0 36 36">
      <path d="M22.5 22.5 L31 30.5" stroke="#fff" stroke-width="6.5" stroke-linecap="round"/>
      <path d="M22.5 22.5 L31 30.5" stroke="#333" stroke-width="3.8" stroke-linecap="round"/>
      <circle cx="16" cy="16" r="10" fill="#fff" stroke="#fff" stroke-width="3"/>
      <circle cx="16" cy="16" r="9" fill="#fff" stroke="#333" stroke-width="2.6"/>
      <path d="M16 11.5 V20.5 M11.5 16 H20.5" stroke="#333" stroke-width="2.6"/>
    </svg>
</body></html>
